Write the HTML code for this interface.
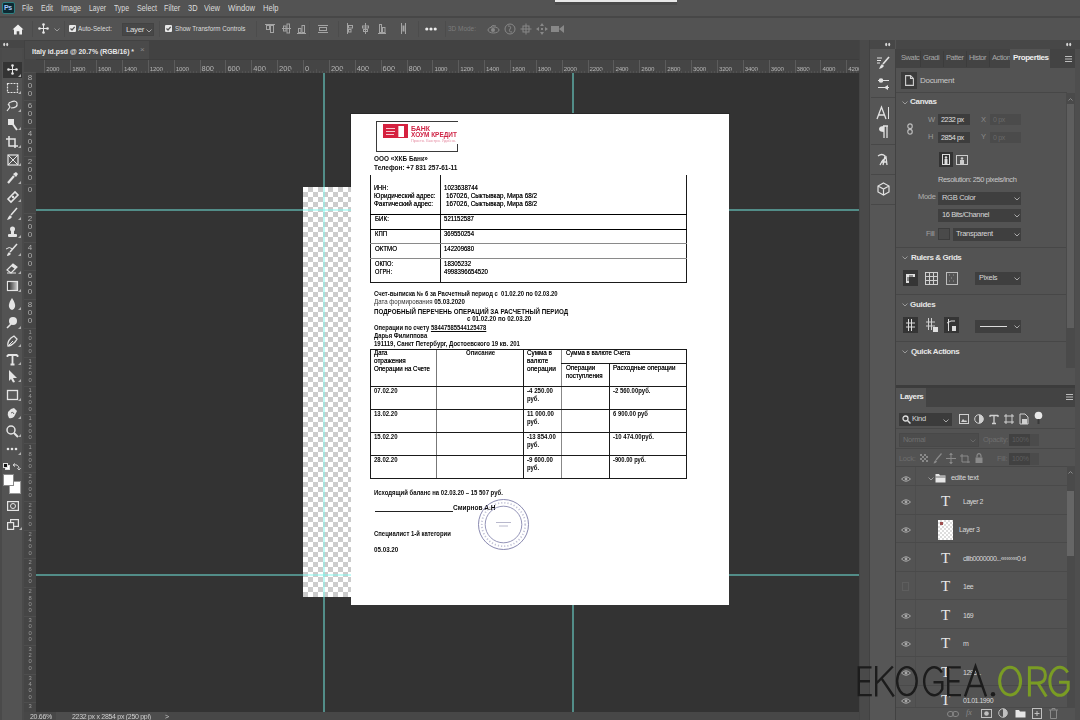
<!DOCTYPE html>
<html><head><meta charset="utf-8">
<style>
*{margin:0;padding:0;box-sizing:border-box}
html,body{width:1080px;height:720px;overflow:hidden;background:#535353;font-family:"Liberation Sans",sans-serif;color:#d6d6d6}
.a{position:absolute}
.t{position:absolute;white-space:nowrap;line-height:1}
svg{position:absolute;overflow:visible}
#menubar{left:0;top:0;width:1080px;height:16px;background:#535353}
.mi{position:absolute;top:4px;font-size:9px;color:#dcdcdc;white-space:nowrap;line-height:9px;letter-spacing:-0.45px}
#sep1{left:0;top:16px;width:1080px;height:2px;background:#474747}
#opt{left:0;top:18px;width:1080px;height:22px;background:#535353}
.osep{position:absolute;top:21px;width:1px;height:16px;background:#464646}
#tabrow{left:24px;top:40px;width:835px;height:19px;background:#424242}
#tab{left:25px;top:41px;width:124px;height:18px;background:#4a4a4a}
#hruler{left:24px;top:59px;width:835px;height:14px;background:#454545;border-top:1px solid #3d3d3d}
#vruler{left:24px;top:59px;width:12px;height:653px;background:#454545}
#tools{left:0;top:40px;width:24px;height:680px;background:#535353}
#canvas{left:36px;top:73px;width:823px;height:639px;background:#333333;overflow:hidden}
#status{left:24px;top:712px;width:835px;height:8px;background:#474747}
#strip{left:859px;top:40px;width:11px;height:680px;background:#4a4a4a;border-left:1px solid #444;border-right:1px solid #424242}
#icons{left:870px;top:49px;width:25px;height:671px;background:#565656}
#rp{left:896px;top:40px;width:184px;height:680px;background:#454545}
.rl{position:absolute;top:62px;font-size:7px;color:#b4b4b4;line-height:1}
.rt{position:absolute;top:60px;width:1px;height:13px;background:#5c5c5c}
.vd{position:absolute;left:26px;font-size:8px;color:#b8b8b8;line-height:8px;width:8px;text-align:center}
.doc{position:absolute;white-space:nowrap;line-height:1;color:#111;font-size:6px}
.b{font-weight:bold}
.hl{position:absolute;background:#222;height:1px}
.vl{position:absolute;background:#222;width:1px}
.pt{position:absolute;white-space:nowrap;line-height:1;font-size:8px;color:#d8d8d8;letter-spacing:-0.3px}
.dd{position:absolute;background:#3b3b3b;height:13px}
.lr{position:absolute;left:917px;width:150px;height:1px;background:#484848}
</style></head>
<body><div style="position:absolute;left:0;top:0;width:1080px;height:720px;overflow:hidden;filter:blur(0.3px)">
<!-- MENU BAR -->
<div id="menubar" class="a"></div>
<div class="a" style="left:2px;top:2px;width:13px;height:12px;background:#0d2a33;border:1px solid #2f7f80;border-radius:2px"></div>
<div class="t" style="left:4px;top:4px;font-size:7px;font-weight:bold;color:#a6c8ff;letter-spacing:-0.5px">Ps</div>
<div class="mi" style="left:22px;font-size:9px;letter-spacing:0;transform-origin:0 50%;transform:scaleX(0.758);">File</div>
<div class="mi" style="left:41px;font-size:9px;letter-spacing:0;transform-origin:0 50%;transform:scaleX(0.774);">Edit</div>
<div class="mi" style="left:61px;font-size:9px;letter-spacing:0;transform-origin:0 50%;transform:scaleX(0.800);">Image</div>
<div class="mi" style="left:89px;font-size:9px;letter-spacing:0;transform-origin:0 50%;transform:scaleX(0.755);">Layer</div>
<div class="mi" style="left:114px;font-size:9px;letter-spacing:0;transform-origin:0 50%;transform:scaleX(0.769);">Type</div>
<div class="mi" style="left:137px;font-size:9px;letter-spacing:0;transform-origin:0 50%;transform:scaleX(0.800);">Select</div>
<div class="mi" style="left:164px;font-size:9px;letter-spacing:0;transform-origin:0 50%;transform:scaleX(0.815);">Filter</div>
<div class="mi" style="left:188px;font-size:9px;letter-spacing:0;transform-origin:0 50%;transform:scaleX(0.826);">3D</div>
<div class="mi" style="left:204px;font-size:9px;letter-spacing:0;transform-origin:0 50%;transform:scaleX(0.827);">View</div>
<div class="mi" style="left:228px;font-size:9px;letter-spacing:0;transform-origin:0 50%;transform:scaleX(0.843);">Window</div>
<div class="mi" style="left:262.5px;font-size:9px;letter-spacing:0;transform-origin:0 50%;transform:scaleX(0.837);">Help</div>
<div class="a" style="left:555px;top:0;width:122px;height:2px;background:#e8e8e8"></div>
<div class="a" style="left:555px;top:2px;width:122px;height:3px;background:#4a4a4a"></div>
<div id="sep1" class="a"></div>
<!-- OPTIONS BAR -->
<div id="opt" class="a"></div>
<svg style="left:12px;top:24px" width="12" height="11" viewBox="0 0 12 11"><path d="M6 0.5 L11.5 5.5 L10 5.5 L10 10.5 L7.3 10.5 L7.3 7.3 L4.7 7.3 L4.7 10.5 L2 10.5 L2 5.5 L0.5 5.5 Z" fill="#efefef"/></svg>
<div class="osep" style="left:32px;background:#4c4c4c"></div>
<svg style="left:38px;top:23px" width="11" height="11" viewBox="0 0 11 11"><path d="M5.5 1 V10 M1 5.5 H10" stroke="#e8e8e8" stroke-width="1"/><circle cx="5.5" cy="1.5" r="1.3" fill="#e8e8e8"/><circle cx="5.5" cy="9.5" r="1.3" fill="#e8e8e8"/><circle cx="1.5" cy="5.5" r="1.3" fill="#e8e8e8"/><circle cx="9.5" cy="5.5" r="1.3" fill="#e8e8e8"/></svg>
<svg style="left:54px;top:28px" width="6" height="4" viewBox="0 0 6 4"><path d="M0.5 0.5 L3 3 L5.5 0.5" stroke="#9a9a9a" fill="none" stroke-width="1"/></svg>
<div class="osep" style="left:64px;background:#4c4c4c"></div>
<svg style="left:69px;top:25px" width="7" height="7" viewBox="0 0 7 7"><rect x="0" y="0" width="7" height="7" rx="1" fill="#e8e8e8"/><path d="M1.5 3.5 L3 5 L5.7 1.8" stroke="#535353" stroke-width="1.2" fill="none"/></svg>
<div class="t" style="left:78px;top:25px;font-size:8px;color:#dcdcdc;transform-origin:0 50%;transform:scaleX(0.780);">Auto-Select:</div>
<div class="a" style="left:122px;top:23px;width:32px;height:13px;background:#474747;border:1px solid #434343"></div>
<div class="t" style="left:126px;top:26px;font-size:8px;color:#dcdcdc;letter-spacing:-0.4px">Layer</div>
<svg style="left:146px;top:29px" width="6" height="4" viewBox="0 0 6 4"><path d="M0.5 0.5 L3 3 L5.5 0.5" stroke="#aaaaaa" fill="none" stroke-width="1"/></svg>
<div class="osep" style="left:159px;background:#4c4c4c"></div>
<svg style="left:165px;top:25px" width="7" height="7" viewBox="0 0 7 7"><rect x="0" y="0" width="7" height="7" rx="1" fill="#e8e8e8"/><path d="M1.5 3.5 L3 5 L5.7 1.8" stroke="#535353" stroke-width="1.2" fill="none"/></svg>
<div class="t" style="left:175px;top:25px;font-size:8px;color:#dcdcdc;transform-origin:0 50%;transform:scaleX(0.781);">Show Transform Controls</div>
<div class="osep" style="left:256px;background:#4c4c4c"></div>
<svg style="left:265px;top:23px" width="10" height="12" viewBox="0 0 10 12"><path d="M0 1.5 H10" stroke="#a4a4a4"/><rect x="1.5" y="2.5" width="3" height="4" fill="none" stroke="#a4a4a4"/><rect x="5.5" y="2.5" width="3" height="7" fill="none" stroke="#a4a4a4"/></svg>
<svg style="left:282px;top:23px" width="9" height="12" viewBox="0 0 9 12"><path d="M0 5.5 H9" stroke="#a4a4a4"/><rect x="1.5" y="3" width="2.5" height="5" fill="none" stroke="#a4a4a4"/><rect x="5" y="1" width="2.5" height="9" fill="none" stroke="#a4a4a4"/></svg>
<svg style="left:297px;top:23px" width="9" height="12" viewBox="0 0 9 12"><path d="M0 10.5 H9" stroke="#a4a4a4"/><rect x="1.5" y="5.5" width="2.5" height="4" fill="none" stroke="#a4a4a4"/><rect x="5" y="2.5" width="2.5" height="7" fill="none" stroke="#a4a4a4"/></svg>
<div class="osep" style="left:309px;background:#4f4f4f"></div>
<svg style="left:318px;top:23px" width="10" height="12" viewBox="0 0 10 12"><path d="M0 2.5 H10 M0 9.5 H10" stroke="#a4a4a4"/><rect x="1.5" y="4.5" width="7" height="3" fill="none" stroke="#a4a4a4"/></svg>
<div class="osep" style="left:338px;background:#4c4c4c"></div>
<svg style="left:346px;top:23px" width="7" height="12" viewBox="0 0 7 12"><path d="M1.5 0 V11" stroke="#a4a4a4"/><rect x="2.5" y="2.5" width="4" height="2.5" fill="none" stroke="#a4a4a4"/><rect x="2.5" y="6.5" width="2.5" height="2.5" fill="none" stroke="#a4a4a4"/></svg>
<svg style="left:361px;top:23px" width="9" height="12" viewBox="0 0 9 12"><path d="M4.5 0 V11" stroke="#a4a4a4"/><rect x="1.5" y="3" width="6" height="2" fill="none" stroke="#a4a4a4"/><rect x="2.5" y="6.5" width="4" height="2" fill="none" stroke="#a4a4a4"/></svg>
<svg style="left:378px;top:23px" width="8" height="12" viewBox="0 0 8 12"><path d="M0 10.5 H8" stroke="#a4a4a4"/><rect x="1.5" y="1.5" width="2" height="8" fill="none" stroke="#a4a4a4"/><rect x="4.5" y="4.5" width="2.5" height="5" fill="none" stroke="#a4a4a4"/></svg>
<svg style="left:400px;top:23px" width="7" height="12" viewBox="0 0 7 12"><path d="M1.5 0 V11 M5.5 0 V11" stroke="#a4a4a4"/><rect x="2.5" y="2.5" width="2" height="6" fill="#a4a4a4"/></svg>
<div class="osep" style="left:418px;background:#4c4c4c"></div>
<svg style="left:425px;top:27px" width="12" height="4" viewBox="0 0 12 4"><circle cx="1.8" cy="2" r="1.6" fill="#ececec"/><circle cx="6" cy="2" r="1.6" fill="#ececec"/><circle cx="10.2" cy="2" r="1.6" fill="#ececec"/></svg>
<div class="osep" style="left:445px;background:#4c4c4c"></div>
<div class="t" style="left:448px;top:25px;font-size:8px;color:#7c7c7c;transform-origin:0 50%;transform:scaleX(0.807);">3D Mode:</div>
<svg style="left:487px;top:23px" width="13" height="12" viewBox="0 0 13 12"><ellipse cx="6.5" cy="7" rx="5.5" ry="3" stroke="#888888" fill="none"/><path d="M3 5 Q5 1 9 3" stroke="#888888" fill="none"/><circle cx="6" cy="7" r="2" fill="#888888"/></svg>
<svg style="left:504px;top:23px" width="12" height="12" viewBox="0 0 12 12"><circle cx="6" cy="6" r="5" stroke="#888888" fill="none"/><path d="M4 3 Q8 3 6 6 Q4 9 8 9" stroke="#888888" fill="none"/></svg>
<svg style="left:520px;top:23px" width="12" height="12" viewBox="0 0 12 12"><path d="M6 0.5 V11.5 M0.5 6 H11.5" stroke="#888888"/><rect x="3" y="3" width="6" height="6" stroke="#888888" fill="none"/></svg>
<svg style="left:536px;top:23px" width="12" height="12" viewBox="0 0 12 12"><path d="M6 0 L8 3 H4 Z M6 12 L8 9 H4 Z M0 6 L3 4 V8 Z M12 6 L9 4 V8 Z" fill="#888888"/><rect x="5" y="5" width="2" height="2" fill="#888888"/></svg>
<svg style="left:551px;top:24px" width="13" height="10" viewBox="0 0 13 10"><rect x="0" y="2" width="8" height="6" fill="#888888"/><path d="M8 5 L13 1 V9 Z" fill="#888888"/></svg>
<!-- TOOLS -->
<div id="tools" class="a"></div>
<div class="a" style="left:0;top:40px;width:24px;height:8px;background:#464646"></div>
<div class="a" style="left:0;top:48px;width:24px;height:14px;background:#4c4c4c"></div>
<svg style="left:3px;top:42px" width="6" height="5" viewBox="0 0 6 5"><ellipse cx="1.2" cy="2.5" rx="1" ry="1.8" fill="#d8d8d8"/><ellipse cx="4.2" cy="2.5" rx="1" ry="1.8" fill="#d8d8d8"/></svg>
<div class="a" style="left:0;top:49px;width:2px;height:671px;background:#4a4a4a"></div>
<div class="a" style="left:22px;top:49px;width:2px;height:671px;background:#4a4a4a"></div>
<div class="a" style="left:3px;top:62px;width:19px;height:16px;background:#343434"></div>
<svg style="left:7px;top:64px" width="11" height="11" viewBox="0 0 11 11"><path d="M5.5 1 V10 M1 5.5 H10" stroke="#e4e4e4" stroke-width="1"/><circle cx="5.5" cy="1.5" r="1.3" fill="#e4e4e4"/><circle cx="5.5" cy="9.5" r="1.3" fill="#e4e4e4"/><circle cx="1.5" cy="5.5" r="1.3" fill="#e4e4e4"/><circle cx="9.5" cy="5.5" r="1.3" fill="#e4e4e4"/></svg><svg style="left:18px;top:74px" width="3" height="3" viewBox="0 0 3 3"><path d="M3 0 V3 H0 Z" fill="#b0b0b0"/></svg>
<svg style="left:5px;top:81px" width="14" height="14" viewBox="0 0 14 14"><rect x="2.5" y="2.5" width="10" height="9" fill="none" stroke="#e4e4e4" stroke-width="1.2" stroke-dasharray="2 1"/></svg><svg style="left:18px;top:91px" width="3" height="3" viewBox="0 0 3 3"><path d="M3 0 V3 H0 Z" fill="#b0b0b0"/></svg>
<svg style="left:5px;top:99px" width="14" height="14" viewBox="0 0 14 14"><path d="M2 12 L5 8 Q2 4 6 3 Q11 1 12 4 Q13 9 6 9 M5 8 L3 5" fill="none" stroke="#e4e4e4" stroke-width="1.2"/></svg><svg style="left:18px;top:109px" width="3" height="3" viewBox="0 0 3 3"><path d="M3 0 V3 H0 Z" fill="#b0b0b0"/></svg>
<svg style="left:5px;top:117px" width="14" height="14" viewBox="0 0 14 14"><rect x="3" y="2" width="6" height="6" fill="#e4e4e4"/><path d="M7 6 L12 13" stroke="#e4e4e4" stroke-width="2"/></svg><svg style="left:18px;top:127px" width="3" height="3" viewBox="0 0 3 3"><path d="M3 0 V3 H0 Z" fill="#b0b0b0"/></svg>
<svg style="left:5px;top:135px" width="14" height="14" viewBox="0 0 14 14"><path d="M4 1 V11 H13 M1 4 H10 V13" fill="none" stroke="#e4e4e4" stroke-width="1.5"/></svg><svg style="left:18px;top:145px" width="3" height="3" viewBox="0 0 3 3"><path d="M3 0 V3 H0 Z" fill="#b0b0b0"/></svg>
<svg style="left:5px;top:153px" width="14" height="14" viewBox="0 0 14 14"><rect x="3" y="2" width="10" height="10" fill="none" stroke="#e4e4e4" stroke-width="1.2"/><path d="M3 2 L13 12 M13 2 L3 12" stroke="#e4e4e4" stroke-width="1"/></svg><svg style="left:18px;top:163px" width="3" height="3" viewBox="0 0 3 3"><path d="M3 0 V3 H0 Z" fill="#b0b0b0"/></svg>
<svg style="left:5px;top:171px" width="14" height="14" viewBox="0 0 14 14"><path d="M3 12 L9 5" stroke="#e4e4e4" stroke-width="2.2"/><path d="M8 3 L11 1 L13 3 L11 6 Z" fill="#e4e4e4"/></svg><svg style="left:18px;top:181px" width="3" height="3" viewBox="0 0 3 3"><path d="M3 0 V3 H0 Z" fill="#b0b0b0"/></svg>
<svg style="left:5px;top:189px" width="14" height="14" viewBox="0 0 14 14"><path d="M3 10 L10 3 L13 6 L6 13 Z" fill="none" stroke="#e4e4e4" stroke-width="1.6"/><circle cx="8" cy="8" r="1.2" fill="#e4e4e4"/></svg><svg style="left:18px;top:199px" width="3" height="3" viewBox="0 0 3 3"><path d="M3 0 V3 H0 Z" fill="#b0b0b0"/></svg>
<svg style="left:5px;top:207px" width="14" height="14" viewBox="0 0 14 14"><path d="M12 1 L6 8" stroke="#e4e4e4" stroke-width="1.5"/><path d="M5 8 L7 10 Q5 13 2 13 Q3 10 5 8 Z" fill="#e4e4e4"/></svg><svg style="left:18px;top:217px" width="3" height="3" viewBox="0 0 3 3"><path d="M3 0 V3 H0 Z" fill="#b0b0b0"/></svg>
<svg style="left:5px;top:225px" width="14" height="14" viewBox="0 0 14 14"><circle cx="7.5" cy="4" r="2.5" fill="#e4e4e4"/><rect x="6" y="5" width="3" height="4" fill="#e4e4e4"/><rect x="3" y="9" width="9" height="3" rx="1" fill="#e4e4e4"/></svg><svg style="left:18px;top:235px" width="3" height="3" viewBox="0 0 3 3"><path d="M3 0 V3 H0 Z" fill="#b0b0b0"/></svg>
<svg style="left:5px;top:243px" width="14" height="14" viewBox="0 0 14 14"><path d="M12 1 L5 9" stroke="#e4e4e4" stroke-width="1.5"/><path d="M4 9 L6 11 Q4 13 2 13 Q2 11 4 9 Z" fill="#e4e4e4"/><path d="M1 6 Q4 3 8 6" stroke="#e4e4e4" fill="none"/></svg><svg style="left:18px;top:253px" width="3" height="3" viewBox="0 0 3 3"><path d="M3 0 V3 H0 Z" fill="#b0b0b0"/></svg>
<svg style="left:5px;top:261px" width="14" height="14" viewBox="0 0 14 14"><path d="M2 9 L8 3 L12 6 L6 12 Z" fill="none" stroke="#e4e4e4" stroke-width="1.2"/><path d="M8 3 L12 6 L10 8 L6 5 Z" fill="#e4e4e4"/><path d="M2 12 H11" stroke="#e4e4e4"/></svg><svg style="left:18px;top:271px" width="3" height="3" viewBox="0 0 3 3"><path d="M3 0 V3 H0 Z" fill="#b0b0b0"/></svg>
<svg style="left:5px;top:279px" width="14" height="14" viewBox="0 0 14 14"><defs><linearGradient id="gg"><stop offset="0" stop-color="#222"/><stop offset="1" stop-color="#ccc"/></linearGradient></defs><rect x="2.5" y="2.5" width="10" height="9" fill="url(#gg)" stroke="#e4e4e4" stroke-width="1.2"/></svg><svg style="left:18px;top:289px" width="3" height="3" viewBox="0 0 3 3"><path d="M3 0 V3 H0 Z" fill="#b0b0b0"/></svg>
<svg style="left:5px;top:297px" width="14" height="14" viewBox="0 0 14 14"><path d="M7 1 Q11 7 10 10 Q9 13 7 13 Q5 13 4 10 Q3 7 7 1 Z" fill="#e4e4e4"/></svg><svg style="left:18px;top:307px" width="3" height="3" viewBox="0 0 3 3"><path d="M3 0 V3 H0 Z" fill="#b0b0b0"/></svg>
<svg style="left:5px;top:316px" width="14" height="14" viewBox="0 0 14 14"><circle cx="8" cy="5" r="4" fill="#e4e4e4"/><path d="M6 8 L2 12" stroke="#e4e4e4" stroke-width="1.6"/></svg><svg style="left:18px;top:326px" width="3" height="3" viewBox="0 0 3 3"><path d="M3 0 V3 H0 Z" fill="#b0b0b0"/></svg>
<svg style="left:5px;top:334px" width="14" height="14" viewBox="0 0 14 14"><path d="M3 12 Q2 8 6 4 L9 2 L12 5 L10 8 Q6 12 3 12 Z" fill="none" stroke="#e4e4e4" stroke-width="1.3"/><path d="M4 11 L8 7" stroke="#e4e4e4"/></svg><svg style="left:18px;top:344px" width="3" height="3" viewBox="0 0 3 3"><path d="M3 0 V3 H0 Z" fill="#b0b0b0"/></svg>
<svg style="left:5px;top:352px" width="14" height="14" viewBox="0 0 14 14"><path d="M2.5 3 H12.5 M7.5 3 V12.5 M5.5 12.5 H9.5 M2.5 3 V5 M12.5 3 V5" stroke="#e4e4e4" stroke-width="1.8" fill="none"/></svg><svg style="left:18px;top:362px" width="3" height="3" viewBox="0 0 3 3"><path d="M3 0 V3 H0 Z" fill="#b0b0b0"/></svg>
<svg style="left:5px;top:369px" width="14" height="14" viewBox="0 0 14 14"><path d="M4 1 L12 9 L8 9 L10 13 L8 13.5 L6 10 L4 12 Z" fill="#e4e4e4"/></svg><svg style="left:18px;top:379px" width="3" height="3" viewBox="0 0 3 3"><path d="M3 0 V3 H0 Z" fill="#b0b0b0"/></svg>
<svg style="left:5px;top:388px" width="14" height="14" viewBox="0 0 14 14"><rect x="2.5" y="2.5" width="10" height="9" fill="#5a5a5a" stroke="#e4e4e4" stroke-width="1.3"/></svg><svg style="left:18px;top:398px" width="3" height="3" viewBox="0 0 3 3"><path d="M3 0 V3 H0 Z" fill="#b0b0b0"/></svg>
<svg style="left:5px;top:406px" width="14" height="14" viewBox="0 0 14 14"><path d="M4 12 Q2 9 3 6 L6 3 L9 2 L12 5 L10 9 Q8 13 4 12 Z" fill="#e4e4e4"/><path d="M6 7 Q8 5 9 8" stroke="#666" fill="none"/></svg><svg style="left:18px;top:416px" width="3" height="3" viewBox="0 0 3 3"><path d="M3 0 V3 H0 Z" fill="#b0b0b0"/></svg>
<svg style="left:5px;top:424px" width="14" height="14" viewBox="0 0 14 14"><circle cx="6" cy="6" r="4" fill="none" stroke="#e4e4e4" stroke-width="1.5"/><path d="M9 9 L13 13" stroke="#e4e4e4" stroke-width="2"/></svg><svg style="left:18px;top:434px" width="3" height="3" viewBox="0 0 3 3"><path d="M3 0 V3 H0 Z" fill="#b0b0b0"/></svg>
<svg style="left:5px;top:442px" width="14" height="14" viewBox="0 0 14 14"><circle cx="3" cy="7" r="1.3" fill="#e4e4e4"/><circle cx="7" cy="7" r="1.3" fill="#e4e4e4"/><circle cx="11" cy="7" r="1.3" fill="#e4e4e4"/></svg><svg style="left:18px;top:452px" width="3" height="3" viewBox="0 0 3 3"><path d="M3 0 V3 H0 Z" fill="#b0b0b0"/></svg>
<svg style="left:3px;top:463px" width="18" height="8" viewBox="0 0 18 8"><rect x="2.5" y="2.5" width="4" height="4" fill="#fff" stroke="#ddd"/><rect x="0.5" y="0.5" width="4" height="4" fill="#111" stroke="#ddd"/><path d="M11 2 Q15 1 16 5 M10 2 L12 0.5 M10 2 L12 3.5 M16 7 L14.5 5 M16 7 L17.5 5" stroke="#ddd" fill="none"/></svg>
<div class="a" style="left:9px;top:481px;width:12px;height:13px;background:#fff;border:1px solid #999"></div>
<div class="a" style="left:3px;top:474px;width:11px;height:12px;background:#fff;border:1px solid #888"></div>
<svg style="left:7px;top:501px" width="12" height="10" viewBox="0 0 12 10"><rect x="0.6" y="0.6" width="10.8" height="8.8" fill="none" stroke="#e4e4e4" stroke-width="1.2"/><circle cx="6" cy="5" r="2.5" fill="none" stroke="#e4e4e4" stroke-width="1"/></svg>
<svg style="left:7px;top:519px" width="12" height="11" viewBox="0 0 12 11"><rect x="3.6" y="0.6" width="7.8" height="6.8" fill="none" stroke="#e4e4e4" stroke-width="1.2"/><rect x="0.6" y="3.6" width="6" height="6.8" fill="#535353" stroke="#e4e4e4" stroke-width="1.2"/></svg>
<svg style="left:19px;top:527px" width="3" height="3" viewBox="0 0 3 3"><path d="M3 0 V3 H0 Z" fill="#b0b0b0"/></svg>
<div id="tabrow" class="a"></div>
<div id="tab" class="a"></div>
<div class="t" style="left:32px;top:47.5px;font-size:8px;font-weight:bold;color:#e8e8e8;transform-origin:0 50%;transform:scaleX(0.861);">Italy id.psd @ 20.7% (RGB/16) *</div>
<div class="t" style="left:140px;top:46px;font-size:8px;color:#8a8a8a">×</div>
<div id="hruler" class="a"></div>
<div id="vruler" class="a"></div>
<div class="rt" style="left:44.3px"></div>
<div class="rl" style="left:46.3px;font-size:6.2px;top:65.7px;letter-spacing:-0.2px">2000</div>
<div class="a" style="left:47.5px;top:71px;width:1px;height:2px;background:#515151"></div>
<div class="a" style="left:50.8px;top:71px;width:1px;height:2px;background:#515151"></div>
<div class="a" style="left:54.0px;top:71px;width:1px;height:2px;background:#515151"></div>
<div class="a" style="left:57.2px;top:69px;width:1px;height:4px;background:#515151"></div>
<div class="a" style="left:60.5px;top:71px;width:1px;height:2px;background:#515151"></div>
<div class="a" style="left:63.7px;top:71px;width:1px;height:2px;background:#515151"></div>
<div class="a" style="left:66.9px;top:71px;width:1px;height:2px;background:#515151"></div>
<div class="rt" style="left:70.2px"></div>
<div class="rl" style="left:72.2px;font-size:6.2px;top:65.7px;letter-spacing:-0.2px">1800</div>
<div class="a" style="left:73.4px;top:71px;width:1px;height:2px;background:#515151"></div>
<div class="a" style="left:76.6px;top:71px;width:1px;height:2px;background:#515151"></div>
<div class="a" style="left:79.9px;top:71px;width:1px;height:2px;background:#515151"></div>
<div class="a" style="left:83.1px;top:69px;width:1px;height:4px;background:#515151"></div>
<div class="a" style="left:86.3px;top:71px;width:1px;height:2px;background:#515151"></div>
<div class="a" style="left:89.6px;top:71px;width:1px;height:2px;background:#515151"></div>
<div class="a" style="left:92.8px;top:71px;width:1px;height:2px;background:#515151"></div>
<div class="rt" style="left:96.0px"></div>
<div class="rl" style="left:98.0px;font-size:6.2px;top:65.7px;letter-spacing:-0.2px">1600</div>
<div class="a" style="left:99.3px;top:71px;width:1px;height:2px;background:#515151"></div>
<div class="a" style="left:102.5px;top:71px;width:1px;height:2px;background:#515151"></div>
<div class="a" style="left:105.7px;top:71px;width:1px;height:2px;background:#515151"></div>
<div class="a" style="left:109.0px;top:69px;width:1px;height:4px;background:#515151"></div>
<div class="a" style="left:112.2px;top:71px;width:1px;height:2px;background:#515151"></div>
<div class="a" style="left:115.4px;top:71px;width:1px;height:2px;background:#515151"></div>
<div class="a" style="left:118.7px;top:71px;width:1px;height:2px;background:#515151"></div>
<div class="rt" style="left:121.9px"></div>
<div class="rl" style="left:123.9px;font-size:6.2px;top:65.7px;letter-spacing:-0.2px">1400</div>
<div class="a" style="left:125.1px;top:71px;width:1px;height:2px;background:#515151"></div>
<div class="a" style="left:128.4px;top:71px;width:1px;height:2px;background:#515151"></div>
<div class="a" style="left:131.6px;top:71px;width:1px;height:2px;background:#515151"></div>
<div class="a" style="left:134.8px;top:69px;width:1px;height:4px;background:#515151"></div>
<div class="a" style="left:138.1px;top:71px;width:1px;height:2px;background:#515151"></div>
<div class="a" style="left:141.3px;top:71px;width:1px;height:2px;background:#515151"></div>
<div class="a" style="left:144.5px;top:71px;width:1px;height:2px;background:#515151"></div>
<div class="rt" style="left:147.8px"></div>
<div class="rl" style="left:149.8px;font-size:6.2px;top:65.7px;letter-spacing:-0.2px">1200</div>
<div class="a" style="left:151.0px;top:71px;width:1px;height:2px;background:#515151"></div>
<div class="a" style="left:154.2px;top:71px;width:1px;height:2px;background:#515151"></div>
<div class="a" style="left:157.5px;top:71px;width:1px;height:2px;background:#515151"></div>
<div class="a" style="left:160.7px;top:69px;width:1px;height:4px;background:#515151"></div>
<div class="a" style="left:163.9px;top:71px;width:1px;height:2px;background:#515151"></div>
<div class="a" style="left:167.2px;top:71px;width:1px;height:2px;background:#515151"></div>
<div class="a" style="left:170.4px;top:71px;width:1px;height:2px;background:#515151"></div>
<div class="rt" style="left:173.7px"></div>
<div class="rl" style="left:175.7px;font-size:6.2px;top:65.7px;letter-spacing:-0.2px">1000</div>
<div class="a" style="left:176.9px;top:71px;width:1px;height:2px;background:#515151"></div>
<div class="a" style="left:180.1px;top:71px;width:1px;height:2px;background:#515151"></div>
<div class="a" style="left:183.4px;top:71px;width:1px;height:2px;background:#515151"></div>
<div class="a" style="left:186.6px;top:69px;width:1px;height:4px;background:#515151"></div>
<div class="a" style="left:189.8px;top:71px;width:1px;height:2px;background:#515151"></div>
<div class="a" style="left:193.1px;top:71px;width:1px;height:2px;background:#515151"></div>
<div class="a" style="left:196.3px;top:71px;width:1px;height:2px;background:#515151"></div>
<div class="rt" style="left:199.5px"></div>
<div class="rl" style="left:201.5px;font-size:7.5px;top:64.5px;letter-spacing:0px">800</div>
<div class="a" style="left:202.8px;top:71px;width:1px;height:2px;background:#515151"></div>
<div class="a" style="left:206.0px;top:71px;width:1px;height:2px;background:#515151"></div>
<div class="a" style="left:209.2px;top:71px;width:1px;height:2px;background:#515151"></div>
<div class="a" style="left:212.5px;top:69px;width:1px;height:4px;background:#515151"></div>
<div class="a" style="left:215.7px;top:71px;width:1px;height:2px;background:#515151"></div>
<div class="a" style="left:218.9px;top:71px;width:1px;height:2px;background:#515151"></div>
<div class="a" style="left:222.2px;top:71px;width:1px;height:2px;background:#515151"></div>
<div class="rt" style="left:225.4px"></div>
<div class="rl" style="left:227.4px;font-size:7.5px;top:64.5px;letter-spacing:0px">600</div>
<div class="a" style="left:228.6px;top:71px;width:1px;height:2px;background:#515151"></div>
<div class="a" style="left:231.9px;top:71px;width:1px;height:2px;background:#515151"></div>
<div class="a" style="left:235.1px;top:71px;width:1px;height:2px;background:#515151"></div>
<div class="a" style="left:238.3px;top:69px;width:1px;height:4px;background:#515151"></div>
<div class="a" style="left:241.6px;top:71px;width:1px;height:2px;background:#515151"></div>
<div class="a" style="left:244.8px;top:71px;width:1px;height:2px;background:#515151"></div>
<div class="a" style="left:248.0px;top:71px;width:1px;height:2px;background:#515151"></div>
<div class="rt" style="left:251.3px"></div>
<div class="rl" style="left:253.3px;font-size:7.5px;top:64.5px;letter-spacing:0px">400</div>
<div class="a" style="left:254.5px;top:71px;width:1px;height:2px;background:#515151"></div>
<div class="a" style="left:257.7px;top:71px;width:1px;height:2px;background:#515151"></div>
<div class="a" style="left:261.0px;top:71px;width:1px;height:2px;background:#515151"></div>
<div class="a" style="left:264.2px;top:69px;width:1px;height:4px;background:#515151"></div>
<div class="a" style="left:267.4px;top:71px;width:1px;height:2px;background:#515151"></div>
<div class="a" style="left:270.7px;top:71px;width:1px;height:2px;background:#515151"></div>
<div class="a" style="left:273.9px;top:71px;width:1px;height:2px;background:#515151"></div>
<div class="rt" style="left:277.1px"></div>
<div class="rl" style="left:279.1px;font-size:7.5px;top:64.5px;letter-spacing:0px">200</div>
<div class="a" style="left:280.4px;top:71px;width:1px;height:2px;background:#515151"></div>
<div class="a" style="left:283.6px;top:71px;width:1px;height:2px;background:#515151"></div>
<div class="a" style="left:286.8px;top:71px;width:1px;height:2px;background:#515151"></div>
<div class="a" style="left:290.1px;top:69px;width:1px;height:4px;background:#515151"></div>
<div class="a" style="left:293.3px;top:71px;width:1px;height:2px;background:#515151"></div>
<div class="a" style="left:296.5px;top:71px;width:1px;height:2px;background:#515151"></div>
<div class="a" style="left:299.8px;top:71px;width:1px;height:2px;background:#515151"></div>
<div class="rt" style="left:303.0px"></div>
<div class="rl" style="left:305.0px;font-size:7.5px;top:64.5px;letter-spacing:0px">0</div>
<div class="a" style="left:306.2px;top:71px;width:1px;height:2px;background:#515151"></div>
<div class="a" style="left:309.5px;top:71px;width:1px;height:2px;background:#515151"></div>
<div class="a" style="left:312.7px;top:71px;width:1px;height:2px;background:#515151"></div>
<div class="a" style="left:315.9px;top:69px;width:1px;height:4px;background:#515151"></div>
<div class="a" style="left:319.2px;top:71px;width:1px;height:2px;background:#515151"></div>
<div class="a" style="left:322.4px;top:71px;width:1px;height:2px;background:#515151"></div>
<div class="a" style="left:325.6px;top:71px;width:1px;height:2px;background:#515151"></div>
<div class="rt" style="left:328.9px"></div>
<div class="rl" style="left:330.9px;font-size:7.5px;top:64.5px;letter-spacing:0px">200</div>
<div class="a" style="left:332.1px;top:71px;width:1px;height:2px;background:#515151"></div>
<div class="a" style="left:335.3px;top:71px;width:1px;height:2px;background:#515151"></div>
<div class="a" style="left:338.6px;top:71px;width:1px;height:2px;background:#515151"></div>
<div class="a" style="left:341.8px;top:69px;width:1px;height:4px;background:#515151"></div>
<div class="a" style="left:345.0px;top:71px;width:1px;height:2px;background:#515151"></div>
<div class="a" style="left:348.3px;top:71px;width:1px;height:2px;background:#515151"></div>
<div class="a" style="left:351.5px;top:71px;width:1px;height:2px;background:#515151"></div>
<div class="rt" style="left:354.7px"></div>
<div class="rl" style="left:356.7px;font-size:7.5px;top:64.5px;letter-spacing:0px">400</div>
<div class="a" style="left:358.0px;top:71px;width:1px;height:2px;background:#515151"></div>
<div class="a" style="left:361.2px;top:71px;width:1px;height:2px;background:#515151"></div>
<div class="a" style="left:364.4px;top:71px;width:1px;height:2px;background:#515151"></div>
<div class="a" style="left:367.7px;top:69px;width:1px;height:4px;background:#515151"></div>
<div class="a" style="left:370.9px;top:71px;width:1px;height:2px;background:#515151"></div>
<div class="a" style="left:374.1px;top:71px;width:1px;height:2px;background:#515151"></div>
<div class="a" style="left:377.4px;top:71px;width:1px;height:2px;background:#515151"></div>
<div class="rt" style="left:380.6px"></div>
<div class="rl" style="left:382.6px;font-size:7.5px;top:64.5px;letter-spacing:0px">600</div>
<div class="a" style="left:383.8px;top:71px;width:1px;height:2px;background:#515151"></div>
<div class="a" style="left:387.1px;top:71px;width:1px;height:2px;background:#515151"></div>
<div class="a" style="left:390.3px;top:71px;width:1px;height:2px;background:#515151"></div>
<div class="a" style="left:393.5px;top:69px;width:1px;height:4px;background:#515151"></div>
<div class="a" style="left:396.8px;top:71px;width:1px;height:2px;background:#515151"></div>
<div class="a" style="left:400.0px;top:71px;width:1px;height:2px;background:#515151"></div>
<div class="a" style="left:403.2px;top:71px;width:1px;height:2px;background:#515151"></div>
<div class="rt" style="left:406.5px"></div>
<div class="rl" style="left:408.5px;font-size:7.5px;top:64.5px;letter-spacing:0px">800</div>
<div class="a" style="left:409.7px;top:71px;width:1px;height:2px;background:#515151"></div>
<div class="a" style="left:412.9px;top:71px;width:1px;height:2px;background:#515151"></div>
<div class="a" style="left:416.2px;top:71px;width:1px;height:2px;background:#515151"></div>
<div class="a" style="left:419.4px;top:69px;width:1px;height:4px;background:#515151"></div>
<div class="a" style="left:422.6px;top:71px;width:1px;height:2px;background:#515151"></div>
<div class="a" style="left:425.9px;top:71px;width:1px;height:2px;background:#515151"></div>
<div class="a" style="left:429.1px;top:71px;width:1px;height:2px;background:#515151"></div>
<div class="rt" style="left:432.4px"></div>
<div class="rl" style="left:434.4px;font-size:6.2px;top:65.7px;letter-spacing:-0.2px">1000</div>
<div class="a" style="left:435.6px;top:71px;width:1px;height:2px;background:#515151"></div>
<div class="a" style="left:438.8px;top:71px;width:1px;height:2px;background:#515151"></div>
<div class="a" style="left:442.1px;top:71px;width:1px;height:2px;background:#515151"></div>
<div class="a" style="left:445.3px;top:69px;width:1px;height:4px;background:#515151"></div>
<div class="a" style="left:448.5px;top:71px;width:1px;height:2px;background:#515151"></div>
<div class="a" style="left:451.8px;top:71px;width:1px;height:2px;background:#515151"></div>
<div class="a" style="left:455.0px;top:71px;width:1px;height:2px;background:#515151"></div>
<div class="rt" style="left:458.2px"></div>
<div class="rl" style="left:460.2px;font-size:6.2px;top:65.7px;letter-spacing:-0.2px">1200</div>
<div class="a" style="left:461.5px;top:71px;width:1px;height:2px;background:#515151"></div>
<div class="a" style="left:464.7px;top:71px;width:1px;height:2px;background:#515151"></div>
<div class="a" style="left:467.9px;top:71px;width:1px;height:2px;background:#515151"></div>
<div class="a" style="left:471.2px;top:69px;width:1px;height:4px;background:#515151"></div>
<div class="a" style="left:474.4px;top:71px;width:1px;height:2px;background:#515151"></div>
<div class="a" style="left:477.6px;top:71px;width:1px;height:2px;background:#515151"></div>
<div class="a" style="left:480.9px;top:71px;width:1px;height:2px;background:#515151"></div>
<div class="rt" style="left:484.1px"></div>
<div class="rl" style="left:486.1px;font-size:6.2px;top:65.7px;letter-spacing:-0.2px">1400</div>
<div class="a" style="left:487.3px;top:71px;width:1px;height:2px;background:#515151"></div>
<div class="a" style="left:490.6px;top:71px;width:1px;height:2px;background:#515151"></div>
<div class="a" style="left:493.8px;top:71px;width:1px;height:2px;background:#515151"></div>
<div class="a" style="left:497.0px;top:69px;width:1px;height:4px;background:#515151"></div>
<div class="a" style="left:500.3px;top:71px;width:1px;height:2px;background:#515151"></div>
<div class="a" style="left:503.5px;top:71px;width:1px;height:2px;background:#515151"></div>
<div class="a" style="left:506.7px;top:71px;width:1px;height:2px;background:#515151"></div>
<div class="rt" style="left:510.0px"></div>
<div class="rl" style="left:512.0px;font-size:6.2px;top:65.7px;letter-spacing:-0.2px">1600</div>
<div class="a" style="left:513.2px;top:71px;width:1px;height:2px;background:#515151"></div>
<div class="a" style="left:516.4px;top:71px;width:1px;height:2px;background:#515151"></div>
<div class="a" style="left:519.7px;top:71px;width:1px;height:2px;background:#515151"></div>
<div class="a" style="left:522.9px;top:69px;width:1px;height:4px;background:#515151"></div>
<div class="a" style="left:526.1px;top:71px;width:1px;height:2px;background:#515151"></div>
<div class="a" style="left:529.4px;top:71px;width:1px;height:2px;background:#515151"></div>
<div class="a" style="left:532.6px;top:71px;width:1px;height:2px;background:#515151"></div>
<div class="rt" style="left:535.8px"></div>
<div class="rl" style="left:537.8px;font-size:6.2px;top:65.7px;letter-spacing:-0.2px">1800</div>
<div class="a" style="left:539.1px;top:71px;width:1px;height:2px;background:#515151"></div>
<div class="a" style="left:542.3px;top:71px;width:1px;height:2px;background:#515151"></div>
<div class="a" style="left:545.5px;top:71px;width:1px;height:2px;background:#515151"></div>
<div class="a" style="left:548.8px;top:69px;width:1px;height:4px;background:#515151"></div>
<div class="a" style="left:552.0px;top:71px;width:1px;height:2px;background:#515151"></div>
<div class="a" style="left:555.2px;top:71px;width:1px;height:2px;background:#515151"></div>
<div class="a" style="left:558.5px;top:71px;width:1px;height:2px;background:#515151"></div>
<div class="rt" style="left:561.7px"></div>
<div class="rl" style="left:563.7px;font-size:6.2px;top:65.7px;letter-spacing:-0.2px">2000</div>
<div class="a" style="left:564.9px;top:71px;width:1px;height:2px;background:#515151"></div>
<div class="a" style="left:568.2px;top:71px;width:1px;height:2px;background:#515151"></div>
<div class="a" style="left:571.4px;top:71px;width:1px;height:2px;background:#515151"></div>
<div class="a" style="left:574.6px;top:69px;width:1px;height:4px;background:#515151"></div>
<div class="a" style="left:577.9px;top:71px;width:1px;height:2px;background:#515151"></div>
<div class="a" style="left:581.1px;top:71px;width:1px;height:2px;background:#515151"></div>
<div class="a" style="left:584.3px;top:71px;width:1px;height:2px;background:#515151"></div>
<div class="rt" style="left:587.6px"></div>
<div class="rl" style="left:589.6px;font-size:6.2px;top:65.7px;letter-spacing:-0.2px">2200</div>
<div class="a" style="left:590.8px;top:71px;width:1px;height:2px;background:#515151"></div>
<div class="a" style="left:594.0px;top:71px;width:1px;height:2px;background:#515151"></div>
<div class="a" style="left:597.3px;top:71px;width:1px;height:2px;background:#515151"></div>
<div class="a" style="left:600.5px;top:69px;width:1px;height:4px;background:#515151"></div>
<div class="a" style="left:603.7px;top:71px;width:1px;height:2px;background:#515151"></div>
<div class="a" style="left:607.0px;top:71px;width:1px;height:2px;background:#515151"></div>
<div class="a" style="left:610.2px;top:71px;width:1px;height:2px;background:#515151"></div>
<div class="rt" style="left:613.4px"></div>
<div class="rl" style="left:615.4px;font-size:6.2px;top:65.7px;letter-spacing:-0.2px">2400</div>
<div class="a" style="left:616.7px;top:71px;width:1px;height:2px;background:#515151"></div>
<div class="a" style="left:619.9px;top:71px;width:1px;height:2px;background:#515151"></div>
<div class="a" style="left:623.1px;top:71px;width:1px;height:2px;background:#515151"></div>
<div class="a" style="left:626.4px;top:69px;width:1px;height:4px;background:#515151"></div>
<div class="a" style="left:629.6px;top:71px;width:1px;height:2px;background:#515151"></div>
<div class="a" style="left:632.8px;top:71px;width:1px;height:2px;background:#515151"></div>
<div class="a" style="left:636.1px;top:71px;width:1px;height:2px;background:#515151"></div>
<div class="rt" style="left:639.3px"></div>
<div class="rl" style="left:641.3px;font-size:6.2px;top:65.7px;letter-spacing:-0.2px">2600</div>
<div class="a" style="left:642.5px;top:71px;width:1px;height:2px;background:#515151"></div>
<div class="a" style="left:645.8px;top:71px;width:1px;height:2px;background:#515151"></div>
<div class="a" style="left:649.0px;top:71px;width:1px;height:2px;background:#515151"></div>
<div class="a" style="left:652.2px;top:69px;width:1px;height:4px;background:#515151"></div>
<div class="a" style="left:655.5px;top:71px;width:1px;height:2px;background:#515151"></div>
<div class="a" style="left:658.7px;top:71px;width:1px;height:2px;background:#515151"></div>
<div class="a" style="left:661.9px;top:71px;width:1px;height:2px;background:#515151"></div>
<div class="rt" style="left:665.2px"></div>
<div class="rl" style="left:667.2px;font-size:6.2px;top:65.7px;letter-spacing:-0.2px">2800</div>
<div class="a" style="left:668.4px;top:71px;width:1px;height:2px;background:#515151"></div>
<div class="a" style="left:671.6px;top:71px;width:1px;height:2px;background:#515151"></div>
<div class="a" style="left:674.9px;top:71px;width:1px;height:2px;background:#515151"></div>
<div class="a" style="left:678.1px;top:69px;width:1px;height:4px;background:#515151"></div>
<div class="a" style="left:681.3px;top:71px;width:1px;height:2px;background:#515151"></div>
<div class="a" style="left:684.6px;top:71px;width:1px;height:2px;background:#515151"></div>
<div class="a" style="left:687.8px;top:71px;width:1px;height:2px;background:#515151"></div>
<div class="rt" style="left:691.0px"></div>
<div class="rl" style="left:693.0px;font-size:6.2px;top:65.7px;letter-spacing:-0.2px">3000</div>
<div class="a" style="left:694.3px;top:71px;width:1px;height:2px;background:#515151"></div>
<div class="a" style="left:697.5px;top:71px;width:1px;height:2px;background:#515151"></div>
<div class="a" style="left:700.8px;top:71px;width:1px;height:2px;background:#515151"></div>
<div class="a" style="left:704.0px;top:69px;width:1px;height:4px;background:#515151"></div>
<div class="a" style="left:707.2px;top:71px;width:1px;height:2px;background:#515151"></div>
<div class="a" style="left:710.5px;top:71px;width:1px;height:2px;background:#515151"></div>
<div class="a" style="left:713.7px;top:71px;width:1px;height:2px;background:#515151"></div>
<div class="rt" style="left:716.9px"></div>
<div class="rl" style="left:718.9px;font-size:6.2px;top:65.7px;letter-spacing:-0.2px">3200</div>
<div class="a" style="left:720.2px;top:71px;width:1px;height:2px;background:#515151"></div>
<div class="a" style="left:723.4px;top:71px;width:1px;height:2px;background:#515151"></div>
<div class="a" style="left:726.6px;top:71px;width:1px;height:2px;background:#515151"></div>
<div class="a" style="left:729.9px;top:69px;width:1px;height:4px;background:#515151"></div>
<div class="a" style="left:733.1px;top:71px;width:1px;height:2px;background:#515151"></div>
<div class="a" style="left:736.3px;top:71px;width:1px;height:2px;background:#515151"></div>
<div class="a" style="left:739.6px;top:71px;width:1px;height:2px;background:#515151"></div>
<div class="rt" style="left:742.8px"></div>
<div class="rl" style="left:744.8px;font-size:6.2px;top:65.7px;letter-spacing:-0.2px">3400</div>
<div class="a" style="left:746.0px;top:71px;width:1px;height:2px;background:#515151"></div>
<div class="a" style="left:749.3px;top:71px;width:1px;height:2px;background:#515151"></div>
<div class="a" style="left:752.5px;top:71px;width:1px;height:2px;background:#515151"></div>
<div class="a" style="left:755.7px;top:69px;width:1px;height:4px;background:#515151"></div>
<div class="a" style="left:759.0px;top:71px;width:1px;height:2px;background:#515151"></div>
<div class="a" style="left:762.2px;top:71px;width:1px;height:2px;background:#515151"></div>
<div class="a" style="left:765.4px;top:71px;width:1px;height:2px;background:#515151"></div>
<div class="rt" style="left:768.7px"></div>
<div class="rl" style="left:770.7px;font-size:6.2px;top:65.7px;letter-spacing:-0.2px">3600</div>
<div class="a" style="left:771.9px;top:71px;width:1px;height:2px;background:#515151"></div>
<div class="a" style="left:775.1px;top:71px;width:1px;height:2px;background:#515151"></div>
<div class="a" style="left:778.4px;top:71px;width:1px;height:2px;background:#515151"></div>
<div class="a" style="left:781.6px;top:69px;width:1px;height:4px;background:#515151"></div>
<div class="a" style="left:784.8px;top:71px;width:1px;height:2px;background:#515151"></div>
<div class="a" style="left:788.1px;top:71px;width:1px;height:2px;background:#515151"></div>
<div class="a" style="left:791.3px;top:71px;width:1px;height:2px;background:#515151"></div>
<div class="rt" style="left:794.5px"></div>
<div class="rl" style="left:796.5px;font-size:6.2px;top:65.7px;letter-spacing:-0.2px">3800</div>
<div class="a" style="left:797.8px;top:71px;width:1px;height:2px;background:#515151"></div>
<div class="a" style="left:801.0px;top:71px;width:1px;height:2px;background:#515151"></div>
<div class="a" style="left:804.2px;top:71px;width:1px;height:2px;background:#515151"></div>
<div class="a" style="left:807.5px;top:69px;width:1px;height:4px;background:#515151"></div>
<div class="a" style="left:810.7px;top:71px;width:1px;height:2px;background:#515151"></div>
<div class="a" style="left:813.9px;top:71px;width:1px;height:2px;background:#515151"></div>
<div class="a" style="left:817.2px;top:71px;width:1px;height:2px;background:#515151"></div>
<div class="rt" style="left:820.4px"></div>
<div class="rl" style="left:822.4px;font-size:6.2px;top:65.7px;letter-spacing:-0.2px">4000</div>
<div class="a" style="left:823.6px;top:71px;width:1px;height:2px;background:#515151"></div>
<div class="a" style="left:826.9px;top:71px;width:1px;height:2px;background:#515151"></div>
<div class="a" style="left:830.1px;top:71px;width:1px;height:2px;background:#515151"></div>
<div class="a" style="left:833.3px;top:69px;width:1px;height:4px;background:#515151"></div>
<div class="a" style="left:836.6px;top:71px;width:1px;height:2px;background:#515151"></div>
<div class="a" style="left:839.8px;top:71px;width:1px;height:2px;background:#515151"></div>
<div class="a" style="left:843.0px;top:71px;width:1px;height:2px;background:#515151"></div>
<div class="rt" style="left:846.3px"></div>
<div class="rl" style="left:848.3px;font-size:6.2px;top:65.7px;letter-spacing:-0.2px">4200</div>
<div class="a" style="left:849.5px;top:71px;width:1px;height:2px;background:#515151"></div>
<div class="a" style="left:852.7px;top:71px;width:1px;height:2px;background:#515151"></div>
<div class="a" style="left:856.0px;top:71px;width:1px;height:2px;background:#515151"></div>
<div class="a" style="left:24px;top:72.0px;width:12px;height:1px;background:#4e4e4e"></div>
<div class="vd" style="top:74.0px;font-size:8px;line-height:8px;color:#b0b0b0">8</div>
<div class="vd" style="top:82.0px;font-size:8px;line-height:8px;color:#b0b0b0">0</div>
<div class="vd" style="top:90.0px;font-size:8px;line-height:8px;color:#b0b0b0">0</div>
<div class="a" style="left:24px;top:100.0px;width:12px;height:1px;background:#4e4e4e"></div>
<div class="vd" style="top:102.0px;font-size:8px;line-height:8px;color:#b0b0b0">6</div>
<div class="vd" style="top:110.0px;font-size:8px;line-height:8px;color:#b0b0b0">0</div>
<div class="vd" style="top:118.0px;font-size:8px;line-height:8px;color:#b0b0b0">0</div>
<div class="a" style="left:24px;top:128.0px;width:12px;height:1px;background:#4e4e4e"></div>
<div class="vd" style="top:130.0px;font-size:8px;line-height:8px;color:#b0b0b0">4</div>
<div class="vd" style="top:138.0px;font-size:8px;line-height:8px;color:#b0b0b0">0</div>
<div class="vd" style="top:146.0px;font-size:8px;line-height:8px;color:#b0b0b0">0</div>
<div class="a" style="left:24px;top:156.0px;width:12px;height:1px;background:#4e4e4e"></div>
<div class="vd" style="top:158.0px;font-size:8px;line-height:8px;color:#b0b0b0">2</div>
<div class="vd" style="top:166.0px;font-size:8px;line-height:8px;color:#b0b0b0">0</div>
<div class="vd" style="top:174.0px;font-size:8px;line-height:8px;color:#b0b0b0">0</div>
<div class="a" style="left:24px;top:184.0px;width:12px;height:1px;background:#4e4e4e"></div>
<div class="vd" style="top:186.0px;font-size:8px;line-height:8px;color:#b0b0b0">0</div>
<div class="a" style="left:24px;top:212.8px;width:12px;height:1px;background:#4e4e4e"></div>
<div class="vd" style="top:214.8px;font-size:8px;line-height:8px;color:#b0b0b0">2</div>
<div class="vd" style="top:222.8px;font-size:8px;line-height:8px;color:#b0b0b0">0</div>
<div class="vd" style="top:230.8px;font-size:8px;line-height:8px;color:#b0b0b0">0</div>
<div class="a" style="left:24px;top:241.6px;width:12px;height:1px;background:#4e4e4e"></div>
<div class="vd" style="top:243.6px;font-size:8px;line-height:8px;color:#b0b0b0">4</div>
<div class="vd" style="top:251.6px;font-size:8px;line-height:8px;color:#b0b0b0">0</div>
<div class="vd" style="top:259.6px;font-size:8px;line-height:8px;color:#b0b0b0">0</div>
<div class="a" style="left:24px;top:270.4px;width:12px;height:1px;background:#4e4e4e"></div>
<div class="vd" style="top:272.4px;font-size:8px;line-height:8px;color:#b0b0b0">6</div>
<div class="vd" style="top:280.4px;font-size:8px;line-height:8px;color:#b0b0b0">0</div>
<div class="vd" style="top:288.4px;font-size:8px;line-height:8px;color:#b0b0b0">0</div>
<div class="a" style="left:24px;top:299.2px;width:12px;height:1px;background:#4e4e4e"></div>
<div class="vd" style="top:301.2px;font-size:8px;line-height:8px;color:#b0b0b0">8</div>
<div class="vd" style="top:309.2px;font-size:8px;line-height:8px;color:#b0b0b0">0</div>
<div class="vd" style="top:317.2px;font-size:8px;line-height:8px;color:#b0b0b0">0</div>
<div class="a" style="left:24px;top:328.0px;width:12px;height:1px;background:#4e4e4e"></div>
<div class="vd" style="top:330.0px;font-size:5.8px;line-height:5.8px;color:#9c9c9c">1</div>
<div class="vd" style="top:336.3px;font-size:5.8px;line-height:5.8px;color:#9c9c9c">0</div>
<div class="vd" style="top:342.6px;font-size:5.8px;line-height:5.8px;color:#9c9c9c">0</div>
<div class="vd" style="top:348.9px;font-size:5.8px;line-height:5.8px;color:#9c9c9c">0</div>
<div class="a" style="left:24px;top:356.8px;width:12px;height:1px;background:#4e4e4e"></div>
<div class="vd" style="top:358.8px;font-size:5.8px;line-height:5.8px;color:#9c9c9c">1</div>
<div class="vd" style="top:365.1px;font-size:5.8px;line-height:5.8px;color:#9c9c9c">2</div>
<div class="vd" style="top:371.4px;font-size:5.8px;line-height:5.8px;color:#9c9c9c">0</div>
<div class="vd" style="top:377.7px;font-size:5.8px;line-height:5.8px;color:#9c9c9c">0</div>
<div class="a" style="left:24px;top:385.6px;width:12px;height:1px;background:#4e4e4e"></div>
<div class="vd" style="top:387.6px;font-size:5.8px;line-height:5.8px;color:#9c9c9c">1</div>
<div class="vd" style="top:393.9px;font-size:5.8px;line-height:5.8px;color:#9c9c9c">4</div>
<div class="vd" style="top:400.2px;font-size:5.8px;line-height:5.8px;color:#9c9c9c">0</div>
<div class="vd" style="top:406.5px;font-size:5.8px;line-height:5.8px;color:#9c9c9c">0</div>
<div class="a" style="left:24px;top:414.4px;width:12px;height:1px;background:#4e4e4e"></div>
<div class="vd" style="top:416.4px;font-size:5.8px;line-height:5.8px;color:#9c9c9c">1</div>
<div class="vd" style="top:422.7px;font-size:5.8px;line-height:5.8px;color:#9c9c9c">6</div>
<div class="vd" style="top:429.0px;font-size:5.8px;line-height:5.8px;color:#9c9c9c">0</div>
<div class="vd" style="top:435.3px;font-size:5.8px;line-height:5.8px;color:#9c9c9c">0</div>
<div class="a" style="left:24px;top:443.2px;width:12px;height:1px;background:#4e4e4e"></div>
<div class="vd" style="top:445.2px;font-size:5.8px;line-height:5.8px;color:#9c9c9c">1</div>
<div class="vd" style="top:451.5px;font-size:5.8px;line-height:5.8px;color:#9c9c9c">8</div>
<div class="vd" style="top:457.8px;font-size:5.8px;line-height:5.8px;color:#9c9c9c">0</div>
<div class="vd" style="top:464.1px;font-size:5.8px;line-height:5.8px;color:#9c9c9c">0</div>
<div class="a" style="left:24px;top:472.0px;width:12px;height:1px;background:#4e4e4e"></div>
<div class="vd" style="top:474.0px;font-size:5.8px;line-height:5.8px;color:#9c9c9c">2</div>
<div class="vd" style="top:480.3px;font-size:5.8px;line-height:5.8px;color:#9c9c9c">0</div>
<div class="vd" style="top:486.6px;font-size:5.8px;line-height:5.8px;color:#9c9c9c">0</div>
<div class="vd" style="top:492.9px;font-size:5.8px;line-height:5.8px;color:#9c9c9c">0</div>
<div class="a" style="left:24px;top:500.8px;width:12px;height:1px;background:#4e4e4e"></div>
<div class="vd" style="top:502.8px;font-size:5.8px;line-height:5.8px;color:#9c9c9c">2</div>
<div class="vd" style="top:509.1px;font-size:5.8px;line-height:5.8px;color:#9c9c9c">2</div>
<div class="vd" style="top:515.4px;font-size:5.8px;line-height:5.8px;color:#9c9c9c">0</div>
<div class="vd" style="top:521.7px;font-size:5.8px;line-height:5.8px;color:#9c9c9c">0</div>
<div class="a" style="left:24px;top:529.6px;width:12px;height:1px;background:#4e4e4e"></div>
<div class="vd" style="top:531.6px;font-size:5.8px;line-height:5.8px;color:#9c9c9c">2</div>
<div class="vd" style="top:537.9px;font-size:5.8px;line-height:5.8px;color:#9c9c9c">4</div>
<div class="vd" style="top:544.2px;font-size:5.8px;line-height:5.8px;color:#9c9c9c">0</div>
<div class="vd" style="top:550.5px;font-size:5.8px;line-height:5.8px;color:#9c9c9c">0</div>
<div class="a" style="left:24px;top:558.4px;width:12px;height:1px;background:#4e4e4e"></div>
<div class="vd" style="top:560.4px;font-size:5.8px;line-height:5.8px;color:#9c9c9c">2</div>
<div class="vd" style="top:566.7px;font-size:5.8px;line-height:5.8px;color:#9c9c9c">6</div>
<div class="vd" style="top:573.0px;font-size:5.8px;line-height:5.8px;color:#9c9c9c">0</div>
<div class="vd" style="top:579.3px;font-size:5.8px;line-height:5.8px;color:#9c9c9c">0</div>
<div class="a" style="left:24px;top:587.2px;width:12px;height:1px;background:#4e4e4e"></div>
<div class="vd" style="top:589.2px;font-size:5.8px;line-height:5.8px;color:#9c9c9c">2</div>
<div class="vd" style="top:595.5px;font-size:5.8px;line-height:5.8px;color:#9c9c9c">8</div>
<div class="vd" style="top:601.8px;font-size:5.8px;line-height:5.8px;color:#9c9c9c">0</div>
<div class="vd" style="top:608.1px;font-size:5.8px;line-height:5.8px;color:#9c9c9c">0</div>
<div class="a" style="left:24px;top:616.0px;width:12px;height:1px;background:#4e4e4e"></div>
<div class="vd" style="top:618.0px;font-size:5.8px;line-height:5.8px;color:#9c9c9c">3</div>
<div class="vd" style="top:624.3px;font-size:5.8px;line-height:5.8px;color:#9c9c9c">0</div>
<div class="vd" style="top:630.6px;font-size:5.8px;line-height:5.8px;color:#9c9c9c">0</div>
<div class="vd" style="top:636.9px;font-size:5.8px;line-height:5.8px;color:#9c9c9c">0</div>
<div class="a" style="left:24px;top:644.8px;width:12px;height:1px;background:#4e4e4e"></div>
<div class="vd" style="top:646.8px;font-size:5.8px;line-height:5.8px;color:#9c9c9c">3</div>
<div class="vd" style="top:653.1px;font-size:5.8px;line-height:5.8px;color:#9c9c9c">2</div>
<div class="vd" style="top:659.4px;font-size:5.8px;line-height:5.8px;color:#9c9c9c">0</div>
<div class="vd" style="top:665.7px;font-size:5.8px;line-height:5.8px;color:#9c9c9c">0</div>
<div class="a" style="left:24px;top:673.6px;width:12px;height:1px;background:#4e4e4e"></div>
<div class="vd" style="top:675.6px;font-size:5.8px;line-height:5.8px;color:#9c9c9c">3</div>
<div class="vd" style="top:681.9px;font-size:5.8px;line-height:5.8px;color:#9c9c9c">4</div>
<div class="vd" style="top:688.2px;font-size:5.8px;line-height:5.8px;color:#9c9c9c">0</div>
<div class="vd" style="top:694.5px;font-size:5.8px;line-height:5.8px;color:#9c9c9c">0</div>
<div class="a" style="left:24px;top:702.4px;width:12px;height:1px;background:#4e4e4e"></div>
<div class="vd" style="top:704.4px;font-size:5.8px;line-height:5.8px;color:#9c9c9c">3</div>
<div id="canvas" class="a">
</div>
<div class="a" style="left:303px;top:187px;width:48px;height:410px;background-color:#fff;background-image:linear-gradient(45deg,#cccccc 25%,transparent 25%,transparent 75%,#cccccc 75%),linear-gradient(45deg,#cccccc 25%,transparent 25%,transparent 75%,#cccccc 75%);background-size:10px 10px;background-position:0 0,5px 5px"></div>
<div class="a" style="left:323px;top:73px;width:2px;height:639px;background:rgba(120,250,240,0.45)"></div>
<div class="a" style="left:572px;top:73px;width:2px;height:639px;background:rgba(120,250,240,0.45)"></div>
<div class="a" style="left:36px;top:209px;width:823px;height:2px;background:rgba(120,250,240,0.45)"></div>
<div class="a" style="left:36px;top:574px;width:823px;height:2px;background:rgba(120,250,240,0.45)"></div>
<div class="a" style="left:350px;top:113px;width:380px;height:1px;background:#282828"></div><div class="a" style="left:350px;top:113px;width:1px;height:74px;background:#282828"></div>
<div class="a" style="left:351px;top:114px;width:378px;height:491px;background:#fff"></div>
<div class="a" style="left:376px;top:121px;width:82px;height:1px;background:#3a3a3a"></div>
<div class="a" style="left:376px;top:151px;width:82px;height:1px;background:#3a3a3a"></div>
<div class="a" style="left:376px;top:121px;width:1px;height:31px;background:#3a3a3a"></div>
<div class="a" style="left:457px;top:144px;width:1px;height:8px;background:#3a3a3a"></div>
<div class="a" style="left:383px;top:124px;width:25px;height:14px;background:#d5213f"></div>
<div class="a" style="left:398px;top:126px;width:6px;height:11px;background:#fff;border-left:1px solid #f1b0bb"></div>
<div class="a" style="left:386px;top:128px;width:9px;height:1px;background:#f7c9d1"></div>
<div class="a" style="left:386px;top:131px;width:9px;height:1px;background:#f7c9d1"></div>
<div class="a" style="left:386px;top:134px;width:8px;height:1px;background:#f7c9d1"></div>
<div class="doc" style="left:411px;top:125.9px;font-size:6.8px;font-weight:bold;color:#cf2445;transform-origin:0 50%;transform:scaleX(1.021);">БАНК</div>
<div class="doc" style="left:411px;top:132.0px;font-size:6.4px;font-weight:bold;color:#cf2445;transform-origin:0 50%;transform:scaleX(1.010);">ХОУМ КРЕДИТ</div>
<div class="doc" style="left:411px;top:139.0px;font-size:4.3px;font-weight:normal;color:#e58aa0;transform-origin:0 50%;transform:scaleX(0.906);">Просто. Быстро. Удобно.</div>
<div class="doc" style="left:374px;top:155.4px;font-size:7px;font-weight:bold;color:#0a0a0a;transform-origin:0 50%;transform:scaleX(0.916);">ООО «ХКБ Банк»</div>
<div class="doc" style="left:374px;top:164.0px;font-size:7px;font-weight:bold;color:#0a0a0a;transform-origin:0 50%;transform:scaleX(0.928);">Телефон: +7 831 257-61-11</div>
<div class="a" style="left:370px;top:175px;width:1px;height:108px;background:#1a1a1a"></div>
<div class="a" style="left:440px;top:175px;width:1px;height:108px;background:#1a1a1a"></div>
<div class="a" style="left:686px;top:175px;width:1px;height:108px;background:#1a1a1a"></div>
<div class="a" style="left:370px;top:214px;width:317px;height:1px;background:#000"></div>
<div class="a" style="left:370px;top:229px;width:317px;height:1px;background:#000"></div>
<div class="a" style="left:370px;top:243px;width:317px;height:1px;background:#8a8a8a"></div>
<div class="a" style="left:370px;top:258px;width:317px;height:1px;background:#8a8a8a"></div>
<div class="a" style="left:370px;top:282px;width:317px;height:1px;background:#1a1a1a"></div>
<div class="doc" style="left:374px;top:185.1px;font-size:6.8px;font-weight:normal;color:#0a0a0a;transform-origin:0 50%;transform:scaleX(0.843);text-shadow:0 0 0.25px #222;">ИНН:</div>
<div class="doc" style="left:374px;top:192.7px;font-size:6.8px;font-weight:normal;color:#0a0a0a;transform-origin:0 50%;transform:scaleX(0.933);text-shadow:0 0 0.25px #222;">Юридический адрес:</div>
<div class="doc" style="left:374px;top:201.4px;font-size:6.8px;font-weight:normal;color:#0a0a0a;transform-origin:0 50%;transform:scaleX(0.941);text-shadow:0 0 0.25px #222;">Фактический адрес:</div>
<div class="doc" style="left:444px;top:185.1px;font-size:6.8px;font-weight:normal;color:#0a0a0a;transform-origin:0 50%;transform:scaleX(0.899);text-shadow:0 0 0.25px #222;">1023638744</div>
<div class="doc" style="left:445.5px;top:192.7px;font-size:6.8px;font-weight:normal;color:#0a0a0a;transform-origin:0 50%;transform:scaleX(0.933);text-shadow:0 0 0.25px #222;">167026, Сыктывкар, Мира 68/2</div>
<div class="doc" style="left:445.5px;top:201.4px;font-size:6.8px;font-weight:normal;color:#0a0a0a;transform-origin:0 50%;transform:scaleX(0.933);text-shadow:0 0 0.25px #222;">167026, Сыктывкар, Мира 68/2</div>
<div class="doc" style="left:374.5px;top:216.3px;font-size:6.8px;font-weight:normal;color:#0a0a0a;transform-origin:0 50%;transform:scaleX(0.921);text-shadow:0 0 0.25px #222;">БИК:</div>
<div class="doc" style="left:444px;top:216.3px;font-size:6.8px;font-weight:normal;color:#0a0a0a;transform-origin:0 50%;transform:scaleX(0.895);text-shadow:0 0 0.25px #222;">521152587</div>
<div class="doc" style="left:375px;top:231.3px;font-size:6.8px;font-weight:normal;color:#0a0a0a;transform-origin:0 50%;transform:scaleX(0.874);text-shadow:0 0 0.25px #222;">КПП</div>
<div class="doc" style="left:444px;top:231.3px;font-size:6.8px;font-weight:normal;color:#0a0a0a;transform-origin:0 50%;transform:scaleX(0.881);text-shadow:0 0 0.25px #222;">369550254</div>
<div class="doc" style="left:375px;top:245.8px;font-size:6.8px;font-weight:normal;color:#0a0a0a;transform-origin:0 50%;transform:scaleX(0.903);text-shadow:0 0 0.25px #222;">ОКТМО</div>
<div class="doc" style="left:444px;top:245.8px;font-size:6.8px;font-weight:normal;color:#0a0a0a;transform-origin:0 50%;transform:scaleX(0.881);text-shadow:0 0 0.25px #222;">142209680</div>
<div class="doc" style="left:375px;top:260.7px;font-size:6.8px;font-weight:normal;color:#0a0a0a;transform-origin:0 50%;transform:scaleX(0.844);text-shadow:0 0 0.25px #222;">ОКПО:</div>
<div class="doc" style="left:444px;top:260.7px;font-size:6.8px;font-weight:normal;color:#0a0a0a;transform-origin:0 50%;transform:scaleX(0.893);text-shadow:0 0 0.25px #222;">18305232</div>
<div class="doc" style="left:375px;top:269.2px;font-size:6.8px;font-weight:normal;color:#0a0a0a;transform-origin:0 50%;transform:scaleX(0.837);text-shadow:0 0 0.25px #222;">ОГРН:</div>
<div class="doc" style="left:444px;top:269.2px;font-size:6.8px;font-weight:normal;color:#0a0a0a;transform-origin:0 50%;transform:scaleX(0.895);text-shadow:0 0 0.25px #222;">4998396654520</div>
<div class="doc" style="left:374px;top:290.6px;font-size:6.6px;font-weight:bold;color:#0a0a0a;transform-origin:0 50%;transform:scaleX(0.897);">Счет-выписка № 6 за Расчетный период с &nbsp;01.02.20 по 02.03.20</div>
<div class="doc" style="left:374px;top:298.6px;font-size:6.6px;font-weight:normal;color:#0a0a0a;transform-origin:0 50%;transform:scaleX(0.932);"><span style="color:#333">Дата формирования </span><b>05.03.2020</b></div>
<div class="doc" style="left:374px;top:307.8px;font-size:7px;font-weight:bold;color:#0a0a0a;transform-origin:0 50%;transform:scaleX(0.886);">ПОДРОБНЫЙ ПЕРЕЧЕНЬ ОПЕРАЦИЙ ЗА РАСЧЕТНЫЙ ПЕРИОД</div>
<div class="doc" style="left:467px;top:315.8px;font-size:6.6px;font-weight:bold;color:#0a0a0a;transform-origin:0 50%;transform:scaleX(0.938);">с 01.02.20 по 02.03.20</div>
<div class="doc" style="left:374px;top:324.6px;font-size:6.6px;font-weight:bold;color:#0a0a0a;transform-origin:0 50%;transform:scaleX(0.888);">Операции по счету <span style="text-decoration:underline">58447585544125478</span></div>
<div class="doc" style="left:374px;top:332.6px;font-size:6.6px;font-weight:bold;color:#0a0a0a;transform-origin:0 50%;transform:scaleX(0.891);">Дарья Филиппова</div>
<div class="doc" style="left:374px;top:340.9px;font-size:6.6px;font-weight:bold;color:#0a0a0a;transform-origin:0 50%;transform:scaleX(0.911);">191119, Санкт Петербург, Достоевского 19 кв. 201</div>
<div class="a" style="left:370px;top:349px;width:1px;height:130px;background:#1a1a1a"></div>
<div class="a" style="left:436px;top:349px;width:1px;height:130px;background:#777"></div>
<div class="a" style="left:523px;top:349px;width:1px;height:130px;background:#1a1a1a"></div>
<div class="a" style="left:561px;top:349px;width:1px;height:130px;background:#888"></div>
<div class="a" style="left:609px;top:363px;width:1px;height:116px;background:#1a1a1a"></div>
<div class="a" style="left:686px;top:349px;width:1px;height:130px;background:#1a1a1a"></div>
<div class="a" style="left:370px;top:349px;width:317px;height:1px;background:#1a1a1a"></div>
<div class="a" style="left:561px;top:363px;width:126px;height:1px;background:#1a1a1a"></div>
<div class="a" style="left:370px;top:386px;width:317px;height:1px;background:#1a1a1a"></div>
<div class="a" style="left:370px;top:409px;width:317px;height:1px;background:#1a1a1a"></div>
<div class="a" style="left:370px;top:432px;width:317px;height:1px;background:#1a1a1a"></div>
<div class="a" style="left:370px;top:455px;width:317px;height:1px;background:#1a1a1a"></div>
<div class="a" style="left:370px;top:478px;width:317px;height:1px;background:#1a1a1a"></div>
<div class="doc" style="left:374px;top:349.8px;font-size:6.8px;font-weight:normal;color:#0a0a0a;transform-origin:0 50%;transform:scaleX(0.897);text-shadow:0 0 0.25px #222;">Дата</div>
<div class="doc" style="left:374px;top:358.1px;font-size:6.8px;font-weight:normal;color:#0a0a0a;transform-origin:0 50%;transform:scaleX(0.939);text-shadow:0 0 0.25px #222;">отражения</div>
<div class="doc" style="left:374px;top:366.4px;font-size:6.8px;font-weight:normal;color:#0a0a0a;transform-origin:0 50%;transform:scaleX(0.905);text-shadow:0 0 0.25px #222;">Операции на Счете</div>
<div class="doc" style="left:466px;top:349.9px;font-size:6.6px;font-weight:bold;color:#0a0a0a;transform-origin:0 50%;transform:scaleX(0.904);">Описание</div>
<div class="doc" style="left:527px;top:349.8px;font-size:6.8px;font-weight:normal;color:#0a0a0a;transform-origin:0 50%;transform:scaleX(0.930);text-shadow:0 0 0.25px #222;">Сумма в</div>
<div class="doc" style="left:527px;top:358.1px;font-size:6.8px;font-weight:normal;color:#0a0a0a;transform-origin:0 50%;transform:scaleX(0.924);text-shadow:0 0 0.25px #222;">валюте</div>
<div class="doc" style="left:527px;top:366.4px;font-size:6.8px;font-weight:normal;color:#0a0a0a;transform-origin:0 50%;transform:scaleX(0.950);text-shadow:0 0 0.25px #222;">операции</div>
<div class="doc" style="left:566px;top:350.0px;font-size:6.8px;font-weight:normal;color:#0a0a0a;transform-origin:0 50%;transform:scaleX(0.886);text-shadow:0 0 0.25px #222;">Сумма в валюте Счета</div>
<div class="doc" style="left:566px;top:364.8px;font-size:6.8px;font-weight:normal;color:#0a0a0a;transform-origin:0 50%;transform:scaleX(0.918);text-shadow:0 0 0.25px #222;">Операции</div>
<div class="doc" style="left:566px;top:373.1px;font-size:6.8px;font-weight:normal;color:#0a0a0a;transform-origin:0 50%;transform:scaleX(0.915);text-shadow:0 0 0.25px #222;">поступления</div>
<div class="doc" style="left:613px;top:364.8px;font-size:6.8px;font-weight:normal;color:#0a0a0a;transform-origin:0 50%;transform:scaleX(0.932);text-shadow:0 0 0.25px #222;">Расходные операции</div>
<div class="doc" style="left:374px;top:388.4px;font-size:6.6px;font-weight:bold;color:#0a0a0a;transform-origin:0 50%;transform:scaleX(0.915);">07.02.20</div>
<div class="doc" style="left:527px;top:388.4px;font-size:6.6px;font-weight:bold;color:#0a0a0a;transform-origin:0 50%;transform:scaleX(0.932);">-4 250.00</div>
<div class="doc" style="left:527px;top:395.6px;font-size:6.6px;font-weight:bold;color:#0a0a0a;transform-origin:0 50%;transform:scaleX(0.902);">руб.</div>
<div class="doc" style="left:613px;top:387.6px;font-size:6.6px;font-weight:bold;color:#0a0a0a;transform-origin:0 50%;transform:scaleX(0.906);">-2 560.00руб.</div>
<div class="doc" style="left:374px;top:411.4px;font-size:6.6px;font-weight:bold;color:#0a0a0a;transform-origin:0 50%;transform:scaleX(0.915);">13.02.20</div>
<div class="doc" style="left:527px;top:411.4px;font-size:6.6px;font-weight:bold;color:#0a0a0a;transform-origin:0 50%;transform:scaleX(0.931);">11 000.00</div>
<div class="doc" style="left:527px;top:418.6px;font-size:6.6px;font-weight:bold;color:#0a0a0a;transform-origin:0 50%;transform:scaleX(0.902);">руб.</div>
<div class="doc" style="left:613px;top:410.6px;font-size:6.6px;font-weight:bold;color:#0a0a0a;transform-origin:0 50%;transform:scaleX(0.893);">6 900.00 руб</div>
<div class="doc" style="left:374px;top:434.4px;font-size:6.6px;font-weight:bold;color:#0a0a0a;transform-origin:0 50%;transform:scaleX(0.915);">15.02.20</div>
<div class="doc" style="left:527px;top:434.4px;font-size:6.6px;font-weight:bold;color:#0a0a0a;transform-origin:0 50%;transform:scaleX(0.913);">-13 854.00</div>
<div class="doc" style="left:527px;top:441.6px;font-size:6.6px;font-weight:bold;color:#0a0a0a;transform-origin:0 50%;transform:scaleX(0.902);">руб.</div>
<div class="doc" style="left:613px;top:433.6px;font-size:6.6px;font-weight:bold;color:#0a0a0a;transform-origin:0 50%;transform:scaleX(0.909);">-10 474.00руб.</div>
<div class="doc" style="left:374px;top:457.4px;font-size:6.6px;font-weight:bold;color:#0a0a0a;transform-origin:0 50%;transform:scaleX(0.915);">28.02.20</div>
<div class="doc" style="left:527px;top:457.4px;font-size:6.6px;font-weight:bold;color:#0a0a0a;transform-origin:0 50%;transform:scaleX(0.932);">-9 600.00</div>
<div class="doc" style="left:527px;top:464.6px;font-size:6.6px;font-weight:bold;color:#0a0a0a;transform-origin:0 50%;transform:scaleX(0.902);">руб.</div>
<div class="doc" style="left:613px;top:456.6px;font-size:6.6px;font-weight:bold;color:#0a0a0a;transform-origin:0 50%;transform:scaleX(0.874);">-900.00 руб.</div>
<div class="doc" style="left:374px;top:489.6px;font-size:6.6px;font-weight:bold;color:#0a0a0a;transform-origin:0 50%;transform:scaleX(0.905);">Исходящий баланс на 02.03.20 – 15 507 руб.</div>
<div class="a" style="left:375px;top:511px;width:78px;height:1px;background:#222"></div>
<div class="doc" style="left:452.5px;top:504.4px;font-size:7px;font-weight:bold;color:#0a0a0a;transform-origin:0 50%;transform:scaleX(0.932);">Смирнов А.Н</div>
<svg style="left:475px;top:496px" width="58" height="58" viewBox="0 0 58 58"><circle cx="28.5" cy="28.5" r="25" fill="none" stroke="#7a7aa6" stroke-width="0.9"/><circle cx="28.5" cy="28.5" r="18.3" fill="none" stroke="#7a7aa6" stroke-width="0.8"/><circle cx="28.5" cy="28.5" r="21.7" fill="none" stroke="#c4c4d8" stroke-width="1.8" stroke-dasharray="1.2 2"/><path d="M21 26.5 H36 M24 30 H33" stroke="#b8b8cc" stroke-width="1"/></svg>
<div class="doc" style="left:374px;top:530.6px;font-size:6.6px;font-weight:bold;color:#0a0a0a;transform-origin:0 50%;transform:scaleX(0.897);">Специалист 1-й категории</div>
<div class="doc" style="left:374px;top:546.9px;font-size:6.6px;font-weight:bold;color:#0a0a0a;transform-origin:0 50%;transform:scaleX(0.946);">05.03.20</div>
<div id="status" class="a"></div>
<div class="a" style="left:56px;top:712px;width:111px;height:8px;background:#4d4d4d"></div>
<div class="t" style="left:30px;top:713px;font-size:7px;color:#cfcfcf;letter-spacing:-0.3px">20.66%</div>
<div class="t" style="left:72px;top:713px;font-size:7px;color:#cfcfcf;letter-spacing:-0.3px">2232 px x 2854 px (250 ppi)</div>
<div class="t" style="left:165px;top:713px;font-size:7px;color:#cfcfcf">&gt;</div>
<div id="strip" class="a"></div>
<div id="icons" class="a"></div>
<!-- ICONS_PLACEHOLDER -->
<div id="rp" class="a"></div>
<div class="a" style="left:870px;top:40px;width:25px;height:9px;background:#474747;"></div>
<svg style="left:885px;top:42px" width="6" height="5" viewBox="0 0 6 5"><ellipse cx="1.2" cy="2.5" rx="1" ry="1.8" fill="#d8d8d8"/><ellipse cx="4.2" cy="2.5" rx="1" ry="1.8" fill="#d8d8d8"/></svg>
<div class="a" style="left:870px;top:49px;width:26px;height:671px;background:#565656;"></div>
<div class="a" style="left:895px;top:49px;width:1px;height:671px;background:#424242;"></div>
<div class="a" style="left:871px;top:97px;width:24px;height:1px;background:#484848;"></div>
<div class="a" style="left:871px;top:144px;width:24px;height:1px;background:#484848;"></div>
<div class="a" style="left:871px;top:174px;width:24px;height:1px;background:#484848;"></div>
<div class="a" style="left:871px;top:204px;width:24px;height:1px;background:#484848;"></div>
<svg style="left:876px;top:56px" width="14" height="14" viewBox="0 0 14 14"><path d="M1 2 H6 M1 4.5 H5 M1 7 H4" stroke="#e2e2e2" stroke-width="1"/><path d="M13 1 L7 8" stroke="#e2e2e2" stroke-width="1.6"/><path d="M6 8 L8 10 Q6 13 3 13 Q4 10 6 8 Z" fill="#e2e2e2"/></svg>
<svg style="left:876px;top:77px" width="14" height="14" viewBox="0 0 14 14"><path d="M2 3.5 H13 M2 10.5 H13" stroke="#e2e2e2" stroke-width="1.2"/><circle cx="5" cy="3.5" r="2.3" fill="#e2e2e2"/><path d="M8 10.5 L12 8 V13 Z" fill="#e2e2e2"/></svg>
<svg style="left:876px;top:106px" width="14" height="14" viewBox="0 0 14 14"><path d="M1 13 L5.5 1 L10 13 M3 9 H8" stroke="#e2e2e2" stroke-width="1.3" fill="none"/><path d="M12.5 1 V13" stroke="#e2e2e2" stroke-width="1"/></svg>
<svg style="left:877px;top:125px" width="12" height="14" viewBox="0 0 12 14"><path d="M6 1 H11 M7 1 V13 M10 1 V13" stroke="#e2e2e2" stroke-width="1.3"/><path d="M7 1 Q2 1 2 4 Q2 7 7 7 Z" fill="#e2e2e2"/></svg>
<svg style="left:876px;top:153px" width="14" height="14" viewBox="0 0 14 14"><path d="M2 3 Q6 0 9 3 L7 12 M4 12 Q6 7 10 4 L11 12 M5 9 H11" stroke="#e2e2e2" stroke-width="1.3" fill="none"/></svg>
<svg style="left:877px;top:182px" width="13" height="14" viewBox="0 0 13 14"><path d="M6.5 1 L12 4 V10 L6.5 13 L1 10 V4 Z M1 4 L6.5 7 L12 4 M6.5 7 V13" stroke="#e2e2e2" stroke-width="1.2" fill="none"/></svg>
<div class="a" style="left:896px;top:40px;width:184px;height:9px;background:#474747;"></div>
<svg style="left:1066px;top:42px" width="6" height="5" viewBox="0 0 6 5"><ellipse cx="1.2" cy="2.5" rx="1" ry="1.8" fill="#d8d8d8"/><ellipse cx="4.2" cy="2.5" rx="1" ry="1.8" fill="#d8d8d8"/></svg>
<div class="a" style="left:1075px;top:49px;width:5px;height:671px;background:#4e4e4e;"></div>
<div class="a" style="left:896px;top:49px;width:179px;height:19px;background:#434343;"></div>
<div class="pt" style="left:901px;top:54.4px;font-size:7.5px;color:#a8a8a8;font-weight:normal;letter-spacing:-0.4px">Swatc</div>
<div class="pt" style="left:923px;top:54.4px;font-size:7.5px;color:#a8a8a8;font-weight:normal;letter-spacing:-0.4px">Gradi</div>
<div class="pt" style="left:946px;top:54.4px;font-size:7.5px;color:#a8a8a8;font-weight:normal;letter-spacing:-0.4px">Patter</div>
<div class="pt" style="left:969px;top:54.4px;font-size:7.5px;color:#a8a8a8;font-weight:normal;letter-spacing:-0.4px">Histor</div>
<div class="pt" style="left:992px;top:54.4px;font-size:7.5px;color:#a8a8a8;font-weight:normal;letter-spacing:-0.4px">Action</div>
<div class="a" style="left:920px;top:51px;width:1px;height:16px;background:#3c3c3c;"></div>
<div class="a" style="left:943px;top:51px;width:1px;height:16px;background:#3c3c3c;"></div>
<div class="a" style="left:966px;top:51px;width:1px;height:16px;background:#3c3c3c;"></div>
<div class="a" style="left:989px;top:51px;width:1px;height:16px;background:#3c3c3c;"></div>
<div class="a" style="left:1010px;top:49px;width:40px;height:19px;background:#535353;"></div>
<div class="pt" style="left:1013px;top:54.1px;font-size:8px;color:#f0f0f0;font-weight:bold;letter-spacing:-0.4px">Properties</div>
<svg style="left:1065px;top:56px" width="7" height="6" viewBox="0 0 7 6"><path d="M0 0.5 H7 M0 3 H7 M0 5.5 H7" stroke="#bdbdbd" stroke-width="1"/></svg>
<div class="a" style="left:896px;top:68px;width:179px;height:317px;background:#535353;"></div>
<div class="a" style="left:901px;top:72px;width:16px;height:17px;background:#3b3b3b;"></div>
<svg style="left:905px;top:75px" width="9" height="11" viewBox="0 0 9 11"><path d="M0.6 0.6 H5.5 L8.4 3.5 V10.4 H0.6 Z M5.5 0.6 V3.5 H8.4" stroke="#d0d0d0" stroke-width="1.1" fill="none"/></svg>
<div class="pt" style="left:920px;top:77.1px;font-size:8px;color:#c8c8c8;font-weight:normal;">Document</div>
<div class="a" style="left:896px;top:92px;width:171px;height:1px;background:#474747;"></div>
<div class="a" style="left:1066px;top:93px;width:9px;height:275px;background:#4a4a4a;"></div>
<svg style="left:1068px;top:98px" width="5" height="3" viewBox="0 0 5 3"><path d="M0.5 2.5 L2.5 0.5 L4.5 2.5" stroke="#8a8a8a" fill="none"/></svg>
<div class="a" style="left:1067px;top:104px;width:7px;height:224px;background:#5e5e5e;"></div>
<svg style="left:902px;top:101px" width="6" height="4" viewBox="0 0 6 4"><path d="M0.5 0.5 L3 3 L5.5 0.5" stroke="#9a9a9a" fill="none" stroke-width="1"/></svg>
<div class="pt" style="left:910px;top:98.4px;font-size:8px;color:#e8e8e8;font-weight:bold;letter-spacing:-0.3px">Canvas</div>
<div class="pt" style="left:928px;top:115.9px;font-size:7.5px;color:#9a9a9a;font-weight:normal;">W</div>
<div class="a" style="left:938px;top:114px;width:32px;height:11px;background:#3d3d3d;"></div>
<div class="pt" style="left:941px;top:116.0px;font-size:7.2px;color:#e0e0e0;font-weight:normal;letter-spacing:-0.4px">2232 px</div>
<div class="pt" style="left:981px;top:115.9px;font-size:7.5px;color:#8a8a8a;font-weight:normal;">X</div>
<div class="a" style="left:990px;top:114px;width:31px;height:11px;background:#4b4b4b;"></div>
<div class="pt" style="left:993px;top:116.2px;font-size:7px;color:#6a6a6a;font-weight:normal;">0 px</div>
<div class="pt" style="left:928px;top:133.2px;font-size:7.5px;color:#9a9a9a;font-weight:normal;">H</div>
<div class="a" style="left:938px;top:132px;width:32px;height:11px;background:#3d3d3d;"></div>
<div class="pt" style="left:941px;top:133.5px;font-size:7.2px;color:#e0e0e0;font-weight:normal;letter-spacing:-0.4px">2854 px</div>
<div class="pt" style="left:981px;top:133.2px;font-size:7.5px;color:#8a8a8a;font-weight:normal;">Y</div>
<div class="a" style="left:990px;top:132px;width:31px;height:11px;background:#4b4b4b;"></div>
<div class="pt" style="left:993px;top:133.7px;font-size:7px;color:#6a6a6a;font-weight:normal;">0 px</div>
<svg style="left:907px;top:123px" width="6" height="12" viewBox="0 0 6 12"><rect x="0.8" y="0.8" width="4.4" height="4.8" rx="2.2" stroke="#bbb" fill="none" stroke-width="1.2"/><rect x="0.8" y="6.4" width="4.4" height="4.8" rx="2.2" stroke="#bbb" fill="none" stroke-width="1.2"/></svg>
<div class="a" style="left:939px;top:152px;width:14px;height:15px;background:#333333;"></div>
<svg style="left:942px;top:154px" width="8" height="11" viewBox="0 0 8 11"><rect x="0.5" y="0.5" width="7" height="10" stroke="#ddd" fill="none"/><circle cx="4" cy="3.5" r="1.3" fill="#ddd"/><rect x="2.5" y="5" width="3" height="5" fill="#ddd"/></svg>
<svg style="left:956px;top:155px" width="12" height="10" viewBox="0 0 12 10"><rect x="0.5" y="0.5" width="11" height="9" stroke="#ccc" fill="none"/><circle cx="6" cy="3.5" r="1.3" fill="#ccc"/><rect x="4" y="5" width="4" height="4" fill="#ccc"/></svg>
<div class="pt" style="left:938px;top:175.9px;font-size:7.5px;color:#c8c8c8;font-weight:normal;letter-spacing:-0.4px">Resolution: 250 pixels/inch</div>
<div class="pt" style="left:918px;top:193.4px;font-size:7.5px;color:#b0b0b0;font-weight:normal;letter-spacing:-0.3px">Mode</div>
<div class="a" style="left:938px;top:192px;width:83px;height:13px;background:#3f3f3f;"></div>
<div class="pt" style="left:942px;top:194.4px;font-size:7.5px;color:#d8d8d8;font-weight:normal;letter-spacing:-0.3px">RGB Color</div>
<svg style="left:1014px;top:197px" width="6" height="4" viewBox="0 0 6 4"><path d="M0.5 0.5 L3 3 L5.5 0.5" stroke="#aaa" fill="none" stroke-width="1"/></svg>
<div class="a" style="left:938px;top:209px;width:83px;height:13px;background:#3f3f3f;"></div>
<div class="pt" style="left:942px;top:211.4px;font-size:7.5px;color:#d8d8d8;font-weight:normal;letter-spacing:-0.4px">16 Bits/Channel</div>
<svg style="left:1014px;top:214px" width="6" height="4" viewBox="0 0 6 4"><path d="M0.5 0.5 L3 3 L5.5 0.5" stroke="#aaa" fill="none" stroke-width="1"/></svg>
<div class="pt" style="left:926px;top:229.9px;font-size:7.5px;color:#a0a0a0;font-weight:normal;">Fill</div>
<div class="a" style="left:938px;top:228px;width:12px;height:12px;background:#4a4a4a;border:1px solid #3c3c3c"></div>
<div class="a" style="left:953px;top:228px;width:68px;height:13px;background:#3f3f3f;"></div>
<div class="pt" style="left:956px;top:230.4px;font-size:7.5px;color:#d8d8d8;font-weight:normal;letter-spacing:-0.3px">Transparent</div>
<svg style="left:1014px;top:233px" width="6" height="4" viewBox="0 0 6 4"><path d="M0.5 0.5 L3 3 L5.5 0.5" stroke="#aaa" fill="none" stroke-width="1"/></svg>
<div class="a" style="left:896px;top:247px;width:170px;height:1px;background:#474747;"></div>
<svg style="left:902px;top:256px" width="6" height="4" viewBox="0 0 6 4"><path d="M0.5 0.5 L3 3 L5.5 0.5" stroke="#9a9a9a" fill="none" stroke-width="1"/></svg>
<div class="pt" style="left:911px;top:253.6px;font-size:8px;color:#e6e6e6;font-weight:bold;letter-spacing:-0.4px">Rulers &amp; Grids</div>
<div class="a" style="left:903px;top:270px;width:15px;height:16px;background:#353535;"></div>
<svg style="left:905px;top:273px" width="11" height="11" viewBox="0 0 11 11"><path d="M1 1 H10 V4 H4 V10 H1 Z" fill="#e0e0e0"/><path d="M5 2 V4 M7 2 V4 M2 5 H4 M2 7 H4" stroke="#353535"/></svg>
<svg style="left:925px;top:272px" width="13" height="13" viewBox="0 0 13 13"><rect x="0.5" y="0.5" width="12" height="12" stroke="#cfcfcf" fill="none"/><path d="M4.5 0 V13 M8.5 0 V13 M0 4.5 H13 M0 8.5 H13" stroke="#cfcfcf"/></svg>
<svg style="left:946px;top:272px" width="12" height="13" viewBox="0 0 12 13"><rect x="0.5" y="0.5" width="11" height="12" stroke="#bdbdbd" fill="none"/><path d="M3 3 h1 M7 3 h1 M5 6 h1 M3 9 h1 M7 9 h1" stroke="#999"/></svg>
<div class="a" style="left:975px;top:272px;width:46px;height:13px;background:#3f3f3f;"></div>
<div class="pt" style="left:979px;top:274.4px;font-size:7.5px;color:#d8d8d8;font-weight:normal;letter-spacing:-0.3px">Pixels</div>
<svg style="left:1014px;top:277px" width="6" height="4" viewBox="0 0 6 4"><path d="M0.5 0.5 L3 3 L5.5 0.5" stroke="#aaa" fill="none" stroke-width="1"/></svg>
<div class="a" style="left:896px;top:294px;width:170px;height:1px;background:#474747;"></div>
<svg style="left:902px;top:303px" width="6" height="4" viewBox="0 0 6 4"><path d="M0.5 0.5 L3 3 L5.5 0.5" stroke="#9a9a9a" fill="none" stroke-width="1"/></svg>
<div class="pt" style="left:910px;top:300.6px;font-size:8px;color:#e6e6e6;font-weight:bold;letter-spacing:-0.3px">Guides</div>
<div class="a" style="left:903px;top:317px;width:15px;height:16px;background:#353535;"></div>
<svg style="left:905px;top:319px" width="11" height="12" viewBox="0 0 11 12"><path d="M3.5 0 V12 M6.5 0 V12" stroke="#ddd"/><path d="M1 4 H10 M1 8 H10" stroke="#ddd"/></svg>
<svg style="left:925px;top:318px" width="13" height="14" viewBox="0 0 13 14"><path d="M3.5 0 V12 M6.5 0 V12 M1 4 H10 M1 8 H10" stroke="#cfcfcf"/><rect x="8" y="9" width="5" height="5" fill="#e0e0e0"/></svg>
<div class="a" style="left:944px;top:317px;width:15px;height:16px;background:#353535;"></div>
<svg style="left:946px;top:319px" width="11" height="13" viewBox="0 0 11 13"><path d="M2.5 0 V12 M1 4 L5 2 M5 2 H9" stroke="#ddd"/><rect x="6" y="7" width="4" height="5" fill="#ddd"/></svg>
<div class="a" style="left:975px;top:320px;width:46px;height:13px;background:#3f3f3f;"></div>
<div class="a" style="left:980px;top:326px;width:27px;height:1px;background:#dcdcdc;"></div>
<svg style="left:1014px;top:325px" width="6" height="4" viewBox="0 0 6 4"><path d="M0.5 0.5 L3 3 L5.5 0.5" stroke="#aaa" fill="none" stroke-width="1"/></svg>
<div class="a" style="left:896px;top:341px;width:170px;height:1px;background:#474747;"></div>
<svg style="left:902px;top:350px" width="6" height="4" viewBox="0 0 6 4"><path d="M0.5 0.5 L3 3 L5.5 0.5" stroke="#9a9a9a" fill="none" stroke-width="1"/></svg>
<div class="pt" style="left:911px;top:347.9px;font-size:8px;color:#e6e6e6;font-weight:bold;letter-spacing:-0.4px">Quick Actions</div>
<div class="a" style="left:896px;top:385px;width:179px;height:3px;background:#3c3c3c;"></div>
<div class="a" style="left:896px;top:388px;width:179px;height:19px;background:#434343;"></div>
<div class="a" style="left:896px;top:388px;width:30px;height:19px;background:#535353;"></div>
<div class="pt" style="left:900px;top:392.6px;font-size:8px;color:#ececec;font-weight:bold;letter-spacing:-0.4px">Layers</div>
<svg style="left:1066px;top:394px" width="7" height="6" viewBox="0 0 7 6"><path d="M0 0.5 H7 M0 3 H7 M0 5.5 H7" stroke="#bdbdbd" stroke-width="1"/></svg>
<div class="a" style="left:896px;top:407px;width:179px;height:313px;background:#535353;"></div>
<div class="a" style="left:899px;top:413px;width:53px;height:13px;background:#3b3b3b;"></div>
<svg style="left:902px;top:415px" width="9" height="9" viewBox="0 0 9 9"><circle cx="3.5" cy="3.5" r="2.5" stroke="#ddd" fill="none" stroke-width="1.3"/><path d="M5.5 5.5 L8.5 8.5" stroke="#ddd" stroke-width="1.5"/></svg>
<div class="pt" style="left:912px;top:415.4px;font-size:7.5px;color:#d8d8d8;font-weight:normal;letter-spacing:-0.3px">Kind</div>
<svg style="left:943px;top:419px" width="6" height="4" viewBox="0 0 6 4"><path d="M0.5 0.5 L3 3 L5.5 0.5" stroke="#aaa" fill="none" stroke-width="1"/></svg>
<svg style="left:959px;top:414px" width="10" height="10" viewBox="0 0 10 10"><rect x="0.5" y="0.5" width="9" height="9" stroke="#d0d0d0" fill="none"/><path d="M2 8 L4 5 L6 7 L7 6 L8 8 Z" fill="#d0d0d0"/></svg>
<svg style="left:974px;top:414px" width="10" height="10" viewBox="0 0 10 10"><circle cx="5" cy="5" r="4.3" stroke="#d0d0d0" fill="none"/><path d="M5 0.7 A4.3 4.3 0 0 1 5 9.3 Z" fill="#d0d0d0"/></svg>
<svg style="left:989px;top:414px" width="10" height="10" viewBox="0 0 10 10"><path d="M1 1.5 H9 M5 1.5 V9.5 M3 9.5 H7 M1 1 V3 M9 1 V3" stroke="#d0d0d0" stroke-width="1.3"/></svg>
<svg style="left:1004px;top:414px" width="10" height="10" viewBox="0 0 10 10"><rect x="2" y="2" width="6" height="6" stroke="#d0d0d0" fill="none"/><path d="M2 0 V2 M8 0 V2 M0 2 H2 M0 8 H2 M2 8 V10 M8 8 V10 M8 2 H10 M8 8 H10" stroke="#d0d0d0"/></svg>
<svg style="left:1019px;top:413px" width="10" height="12" viewBox="0 0 10 12"><path d="M1 1 H6 L9 4 V11 H1 Z" stroke="#d0d0d0" fill="none"/><rect x="3" y="6" width="5" height="5" fill="#d0d0d0"/></svg>
<svg style="left:1034px;top:411px" width="9" height="14" viewBox="0 0 9 14"><circle cx="4.5" cy="4.5" r="3.8" fill="#e8e8e8"/><rect x="3.5" y="8" width="2" height="5" fill="#3a3a3a"/></svg>
<div class="a" style="left:896px;top:428px;width:179px;height:1px;background:#484848;"></div>
<div class="a" style="left:899px;top:433px;width:80px;height:14px;background:#4c4c4c;border:1px solid #484848"></div>
<div class="pt" style="left:903px;top:435.9px;font-size:7.5px;color:#707070;font-weight:normal;">Normal</div>
<svg style="left:970px;top:439px" width="6" height="4" viewBox="0 0 6 4"><path d="M0.5 0.5 L3 3 L5.5 0.5" stroke="#686868" fill="none" stroke-width="1"/></svg>
<div class="pt" style="left:983px;top:435.9px;font-size:7.5px;color:#6e6e6e;font-weight:normal;letter-spacing:-0.3px">Opacity:</div>
<div class="a" style="left:1009px;top:434px;width:21px;height:12px;background:#414141;"></div>
<div class="a" style="left:1030px;top:434px;width:9px;height:12px;background:#4b4b4b;"></div>
<div class="pt" style="left:1012px;top:436.1px;font-size:7px;color:#5e5e5e;font-weight:normal;">100%</div>
<div class="a" style="left:896px;top:448px;width:179px;height:1px;background:#484848;"></div>
<div class="pt" style="left:899px;top:454.9px;font-size:7.5px;color:#6e6e6e;font-weight:normal;">Lock:</div>
<svg style="left:920px;top:454px" width="8" height="9" viewBox="0 0 8 9"><path d="M0 0 h2 v2 h-2z M4 0 h2 v2 h-2z M2 2 h2 v2 h-2z M6 2 h2 v2 h-2z M0 4 h2 v2 h-2z M4 4 h2 v2 h-2z M2 6 h2 v2 h-2z M6 6 h2 v2 h-2z" fill="#8a8a8a"/></svg>
<svg style="left:933px;top:453px" width="9" height="11" viewBox="0 0 9 11"><path d="M8.5 0.5 L3 7" stroke="#8a8a8a" stroke-width="1.2"/><path d="M2.5 7 L4 8.5 Q3 10.5 0.5 10.5 Q1 8 2.5 7Z" fill="#8a8a8a"/></svg>
<svg style="left:946px;top:453px" width="10" height="11" viewBox="0 0 10 11"><path d="M5 0 V11 M0 5.5 H10" stroke="#8a8a8a"/><path d="M5 0 L7 2 H3 Z M5 11 L7 9 H3 Z" fill="#8a8a8a"/></svg>
<svg style="left:960px;top:454px" width="10" height="9" viewBox="0 0 10 9"><path d="M2 0 V8 H10 M0 2 H8 V9" stroke="#8a8a8a" fill="none"/></svg>
<svg style="left:975px;top:453px" width="8" height="10" viewBox="0 0 8 10"><path d="M2 4.5 V3 Q2 0.7 4 0.7 Q6 0.7 6 3 V4.5" stroke="#8a8a8a" fill="none" stroke-width="1.2"/><rect x="0.5" y="4.5" width="7" height="5.5" fill="#8a8a8a"/></svg>
<div class="pt" style="left:997px;top:454.9px;font-size:7.5px;color:#6e6e6e;font-weight:normal;">Fill:</div>
<div class="a" style="left:1009px;top:453px;width:21px;height:12px;background:#414141;"></div>
<div class="a" style="left:1030px;top:453px;width:9px;height:12px;background:#4b4b4b;"></div>
<div class="pt" style="left:1012px;top:455.1px;font-size:7px;color:#5e5e5e;font-weight:normal;">100%</div>
<div class="a" style="left:896px;top:466px;width:171px;height:1px;background:#484848;"></div>
<div class="a" style="left:915px;top:467px;width:1px;height:240px;background:#4d4d4d;"></div>
<div class="a" style="left:1067px;top:466px;width:8px;height:241px;background:#4a4a4a;"></div>
<svg style="left:1068px;top:471px" width="5" height="3" viewBox="0 0 5 3"><path d="M0.5 2.5 L2.5 0.5 L4.5 2.5" stroke="#8a8a8a" fill="none"/></svg>
<div class="a" style="left:1067px;top:491px;width:7px;height:65px;background:#666666;"></div>
<svg style="left:901px;top:475.5px" width="10" height="6" viewBox="0 0 10 6"><path d="M0.5 3 Q5 -1.5 9.5 3 Q5 7.5 0.5 3 Z" stroke="#a8a8a8" fill="none" stroke-width="1"/><circle cx="5" cy="3" r="1.4" fill="#a8a8a8"/></svg>
<svg style="left:928px;top:477px" width="6" height="4" viewBox="0 0 6 4"><path d="M0.5 0.5 L3 3 L5.5 0.5" stroke="#9a9a9a" fill="none" stroke-width="1"/></svg>
<svg style="left:935px;top:473px" width="11" height="10" viewBox="0 0 11 10"><path d="M0.5 1 H4 L5 2.5 H10.5 V9.5 H0.5 Z" fill="#e6e6e6"/><path d="M0.5 4 H10.5" stroke="#535353" stroke-width="0.8"/></svg>
<div class="pt" style="left:951px;top:474.4px;font-size:7.5px;color:#d8d8d8;font-weight:normal;letter-spacing:-0.3px">edite text</div>
<div class="a" style="left:896px;top:485px;width:171px;height:1px;background:#4a4a4a;"></div>
<svg style="left:901px;top:498.5px" width="10" height="6" viewBox="0 0 10 6"><path d="M0.5 3 Q5 -1.5 9.5 3 Q5 7.5 0.5 3 Z" stroke="#a8a8a8" fill="none" stroke-width="1"/><circle cx="5" cy="3" r="1.4" fill="#a8a8a8"/></svg>
<div class="t" style="left:941px;top:493.5px;font-family:'Liberation Serif',serif;font-size:15px;line-height:15px;color:#e8e8e8">T</div>
<div class="pt" style="left:963px;top:497.6px;font-size:7px;color:#d8d8d8;font-weight:normal;letter-spacing:-0.5px">Layer 2</div>
<div class="a" style="left:896px;top:514px;width:171px;height:1px;background:#4a4a4a;"></div>
<svg style="left:901px;top:527px" width="10" height="6" viewBox="0 0 10 6"><path d="M0.5 3 Q5 -1.5 9.5 3 Q5 7.5 0.5 3 Z" stroke="#a8a8a8" fill="none" stroke-width="1"/><circle cx="5" cy="3" r="1.4" fill="#a8a8a8"/></svg>
<div class="a" style="left:938px;top:520px;width:15px;height:20px;background-color:#fff;background-image:linear-gradient(45deg,#ddd 25%,transparent 25%,transparent 75%,#ddd 75%),linear-gradient(45deg,#ddd 25%,transparent 25%,transparent 75%,#ddd 75%);background-size:4px 4px;background-position:0 0,2px 2px"></div>
<div class="a" style="left:940px;top:522px;width:3px;height:3px;background:#a05050"></div>
<div class="pt" style="left:959px;top:526.1px;font-size:7px;color:#d8d8d8;font-weight:normal;letter-spacing:-0.4px">Layer 3</div>
<div class="a" style="left:896px;top:542px;width:171px;height:1px;background:#4a4a4a;"></div>
<svg style="left:901px;top:555.5px" width="10" height="6" viewBox="0 0 10 6"><path d="M0.5 3 Q5 -1.5 9.5 3 Q5 7.5 0.5 3 Z" stroke="#a8a8a8" fill="none" stroke-width="1"/><circle cx="5" cy="3" r="1.4" fill="#a8a8a8"/></svg>
<div class="t" style="left:941px;top:550.5px;font-family:'Liberation Serif',serif;font-size:15px;line-height:15px;color:#e8e8e8">T</div>
<div class="pt" style="left:963px;top:554.6px;font-size:7px;color:#d8d8d8;font-weight:normal;letter-spacing:-0.5px">clllb0000000...‹‹‹‹‹‹‹‹‹0 d</div>
<div class="a" style="left:896px;top:571px;width:171px;height:1px;background:#4a4a4a;"></div>
<div class="a" style="left:902px;top:582px;width:7px;height:9px;border:1px solid #5e5e5e"></div>
<div class="t" style="left:941px;top:579px;font-family:'Liberation Serif',serif;font-size:15px;line-height:15px;color:#e8e8e8">T</div>
<div class="pt" style="left:963px;top:583.1px;font-size:7px;color:#d8d8d8;font-weight:normal;letter-spacing:-0.5px">1ee</div>
<div class="a" style="left:896px;top:599px;width:171px;height:1px;background:#4a4a4a;"></div>
<svg style="left:901px;top:612.5px" width="10" height="6" viewBox="0 0 10 6"><path d="M0.5 3 Q5 -1.5 9.5 3 Q5 7.5 0.5 3 Z" stroke="#a8a8a8" fill="none" stroke-width="1"/><circle cx="5" cy="3" r="1.4" fill="#a8a8a8"/></svg>
<div class="t" style="left:941px;top:607.5px;font-family:'Liberation Serif',serif;font-size:15px;line-height:15px;color:#e8e8e8">T</div>
<div class="pt" style="left:963px;top:611.6px;font-size:7px;color:#d8d8d8;font-weight:normal;letter-spacing:-0.5px">169</div>
<div class="a" style="left:896px;top:628px;width:171px;height:1px;background:#4a4a4a;"></div>
<svg style="left:901px;top:641px" width="10" height="6" viewBox="0 0 10 6"><path d="M0.5 3 Q5 -1.5 9.5 3 Q5 7.5 0.5 3 Z" stroke="#a8a8a8" fill="none" stroke-width="1"/><circle cx="5" cy="3" r="1.4" fill="#a8a8a8"/></svg>
<div class="t" style="left:941px;top:636px;font-family:'Liberation Serif',serif;font-size:15px;line-height:15px;color:#e8e8e8">T</div>
<div class="pt" style="left:963px;top:640.1px;font-size:7px;color:#d8d8d8;font-weight:normal;letter-spacing:-0.5px">m</div>
<div class="a" style="left:896px;top:656px;width:171px;height:1px;background:#4a4a4a;"></div>
<svg style="left:901px;top:669.5px" width="10" height="6" viewBox="0 0 10 6"><path d="M0.5 3 Q5 -1.5 9.5 3 Q5 7.5 0.5 3 Z" stroke="#a8a8a8" fill="none" stroke-width="1"/><circle cx="5" cy="3" r="1.4" fill="#a8a8a8"/></svg>
<div class="t" style="left:941px;top:664.5px;font-family:'Liberation Serif',serif;font-size:15px;line-height:15px;color:#e8e8e8">T</div>
<div class="pt" style="left:963px;top:668.6px;font-size:7px;color:#d8d8d8;font-weight:normal;letter-spacing:-0.5px">1295...</div>
<div class="a" style="left:896px;top:685px;width:171px;height:1px;background:#4a4a4a;"></div>
<svg style="left:901px;top:698px" width="10" height="6" viewBox="0 0 10 6"><path d="M0.5 3 Q5 -1.5 9.5 3 Q5 7.5 0.5 3 Z" stroke="#a8a8a8" fill="none" stroke-width="1"/><circle cx="5" cy="3" r="1.4" fill="#a8a8a8"/></svg>
<div class="t" style="left:941px;top:693px;font-family:'Liberation Serif',serif;font-size:15px;line-height:15px;color:#e8e8e8">T</div>
<div class="pt" style="left:963px;top:697.1px;font-size:7px;color:#d8d8d8;font-weight:normal;letter-spacing:-0.5px">01.01.1990</div>
<div class="a" style="left:896px;top:707px;width:179px;height:13px;background:#535353;"></div>
<div class="a" style="left:896px;top:707px;width:179px;height:1px;background:#4a4a4a;"></div>
<svg style="left:947px;top:710px" width="12" height="8" viewBox="0 0 12 8"><rect x="0.5" y="1.5" width="6" height="5" rx="2.5" stroke="#888" fill="none"/><rect x="5.5" y="1.5" width="6" height="5" rx="2.5" stroke="#888" fill="none"/></svg>
<div class="t" style="left:966px;top:709px;font-size:8px;font-style:italic;color:#8a8a8a;font-family:'Liberation Serif',serif">fx</div>
<svg style="left:981px;top:709px" width="11" height="9" viewBox="0 0 11 9"><rect x="0.5" y="0.5" width="10" height="8" stroke="#c0c0c0" fill="none"/><circle cx="5.5" cy="4.5" r="2.3" fill="#c0c0c0"/></svg>
<svg style="left:998px;top:708px" width="10" height="11" viewBox="0 0 10 11"><circle cx="5" cy="5" r="4.3" stroke="#c0c0c0" fill="none"/><path d="M5 0.7 A4.3 4.3 0 0 1 5 9.3 Z" fill="#c0c0c0"/></svg>
<svg style="left:1015px;top:709px" width="11" height="9" viewBox="0 0 11 9"><path d="M0.5 1 H4 L5 2.5 H10.5 V8.5 H0.5 Z" fill="#e6e6e6"/></svg>
<svg style="left:1032px;top:708px" width="10" height="11" viewBox="0 0 10 11"><rect x="0.5" y="0.5" width="9" height="10" stroke="#c0c0c0" fill="none"/><path d="M5 3 V8 M2.5 5.5 H7.5" stroke="#c0c0c0"/></svg>
<svg style="left:1049px;top:708px" width="9" height="11" viewBox="0 0 9 11"><path d="M0 2 H9 M3 2 V0.5 H6 V2 M1.5 2 V10.5 H7.5 V2" stroke="#8a8a8a" fill="none"/></svg>
<svg style="left:0;top:0" width="1080" height="720" viewBox="0 0 1080 720"><g fill="none" stroke="#1c1c1c" stroke-width="2.4" stroke-linejoin="miter"><path d="M871.5 667.4 H858.8 V695.1 H871.8 M858.8 681.2 H870"/><path d="M876.2 666 V696.5 M892.8 666.5 L876.8 683 M881.5 678.3 L893.8 696.5"/><ellipse cx="906.9" cy="681.1" rx="9.8" ry="14"/><path d="M941.8 672.5 A9.9 14 0 1 0 942.3 689 V682.3 H933.5"/><path d="M960.8 667.4 H948.2 V695.1 H961 M948.2 681.2 H959.5"/><path d="M965 696.5 L975.5 666.5 L986 696.5 M968.7 686 H982.3"/></g><circle cx="993" cy="694.3" r="2.2" fill="#1c1c1c"/><g fill="none" stroke="#7a9c24" stroke-width="3"><ellipse cx="1010.1" cy="681.1" rx="10.5" ry="13.8"/><path d="M1029.4 696.5 V667.7 H1037.5 Q1045.4 667.7 1045.4 675.3 Q1045.4 683 1037.5 683 H1029.4 M1037.8 683 L1046.3 696.5"/><path d="M1067.6 672.5 A10 14 0 1 0 1068.2 689 V682.3 H1059"/></g></svg>
</div></body></html>
